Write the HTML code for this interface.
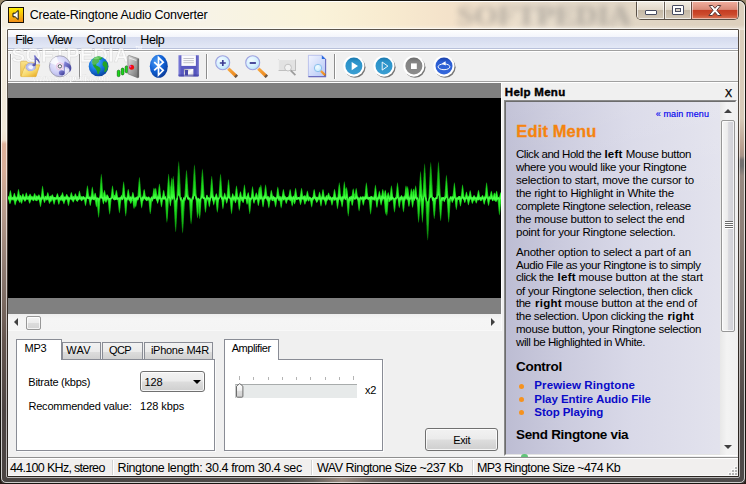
<!DOCTYPE html>
<html lang="en"><head><meta charset="utf-8"><title>Create-Ringtone Audio Converter</title>
<style>
html,body{margin:0;padding:0}
body{width:746px;height:484px;overflow:hidden;background:linear-gradient(to bottom,#9a8a6c 0,#6b5a45 30px,#2a1c18 440px);position:relative;font-family:"Liberation Sans","DejaVu Sans",sans-serif;font-size:12px;color:#000}
.a{position:absolute;display:block}
.t{position:absolute;white-space:nowrap}
#win{left:0;top:0;width:746px;height:484px;border-radius:7px 7px 6px 6px;background:#17140f;overflow:hidden}
#titlebg{left:1px;top:1px;width:744px;height:29px;border-radius:6px 6px 0 0;background:linear-gradient(to bottom,rgba(255,255,255,.9) 0,rgba(255,255,255,.9) 1px,rgba(255,255,255,0) 1.5px,rgba(255,255,255,0) 24px,rgba(255,255,255,.35) 28px),linear-gradient(to right,#f4efe1 0,#f7f3e6 28%,#faf3da 42%,#f8ebd0 52%,#f4e2ca 60%,#eadfce 72%,#e2d7c6 84%,#dccfbc 100%)}
#frameL{left:1px;top:30px;width:7px;height:448px;background:linear-gradient(to bottom,#f3eee0 0,#f1e9d9 100px,#f0e2d0 110px,#e0b29a 114px,#d9ae98 140px,#b89c8c 180px,#8d7a70 240px,#65564f 310px,#4c4442 380px,#4a4442 448px)}
#frameR{left:738px;top:30px;width:7px;height:448px;background:linear-gradient(to bottom,#dccfbc 0,#d8cab8 88px,#b89e8e 118px,#a89488 126px,#757070 130px,#707070 136px,#988a82 146px,#8e8078 200px,#6a605c 300px,#4e4846 380px,#4e4a4a 448px)}
#frameB{left:1px;top:476px;width:744px;height:7px;background:linear-gradient(to right,#4a4442 0,#504c4a 38%,#66605c 42%,#9a8a80 45.800%,#6a625e 50%,#524e4c 56%,#4e4a4a 100%)}
#client{left:8px;top:30px;width:730px;height:446px;background:#f0f0f0;overflow:hidden}
#menubar{left:0;top:0;width:730px;height:19px;background:linear-gradient(to bottom,#ffffff 0,#f3f5fb 7px,#d5dbee 7.5px,#e3e8f6 18px);border-bottom:1px solid #b9c1da;box-sizing:border-box}
#tbtop{left:0;top:19px;width:730px;height:3px;background:linear-gradient(to bottom,#fff 0,#fff 1px,#a0a0a0 1px,#a0a0a0 2px,#fff 2px,#fff 3px)}
#tbbot{left:0;top:51px;width:730px;height:2px;background:linear-gradient(to bottom,#a0a0a0 0,#a0a0a0 1px,#fff 1px,#fff 2px)}
.sep{width:1px;height:25px;top:24px;background:#8c8c8c;box-shadow:1px 0 0 #fff}
#band1{left:0;top:53px;width:493px;height:15px;background:#808080}
#wavebox{left:0;top:68px;width:493px;height:200px;background:#000;overflow:hidden}
#band2{left:0;top:268px;width:493px;height:16px;background:#808080}
#hscroll{left:0;top:284px;width:493px;height:16px;background:linear-gradient(to bottom,#eeeeee,#f5f5f5 30%,#f4f4f4);border-bottom:1px solid #f8f8f8}
.arrowL{width:0;height:0;border-top:4px solid transparent;border-bottom:4px solid transparent;border-right:4px solid #404040}
.arrowR{width:0;height:0;border-top:4px solid transparent;border-bottom:4px solid transparent;border-left:4px solid #404040}
#hthumb{left:18px;top:286px;width:15px;height:14px;border:1px solid #979797;border-radius:2px;box-sizing:border-box;background:linear-gradient(to bottom,#f4f4f4 0,#ececec 48%,#dcdcdc 52%,#d4d4d4 100%);box-shadow:inset 0 0 0 1px rgba(255,255,255,.7)}
.pane{background:#fff;border:1px solid #898c95;box-sizing:border-box;box-shadow:1px 1px 0 #fbfbfb}
.tab{box-sizing:border-box;border:1px solid #898c95;border-bottom:none;background:linear-gradient(to bottom,#f2f2f2 0,#ebebeb 50%,#dddddd 50%,#cfcfcf 100%)}
.tabsel{box-sizing:border-box;border:1px solid #898c95;border-bottom:none;background:#fff}
#combo{left:132px;top:341px;width:65px;height:21px;box-sizing:border-box;border:1px solid #707070;border-radius:3px;background:linear-gradient(to bottom,#f2f2f2 0,#ebebeb 48%,#dddddd 52%,#cfcfcf 100%);box-shadow:inset 0 0 0 1px rgba(255,255,255,.8)}
#comboarrow{left:185px;top:350px;width:0;height:0;border-left:4px solid transparent;border-right:4px solid transparent;border-top:4px solid #000}
#exit{left:417px;top:398px;width:73px;height:23px;box-sizing:border-box;border:1px solid #707070;border-radius:3px;background:linear-gradient(to bottom,#f2f2f2 0,#ebebeb 48%,#dddddd 52%,#cfcfcf 100%);box-shadow:inset 0 0 0 1px rgba(255,255,255,.8)}
#track{left:227px;top:354px;width:122px;height:14px;background:#e7eaea;border-top:1px solid #a8acac;border-left:1px solid #c8caca;box-sizing:border-box}
.tick{width:1px;height:3px;top:347px;background:#b4b4b4}
#sthumb{left:227.5px;top:353px}
#status{left:0;top:427px;width:730px;height:19px;background:#f1efee;border-top:1px solid #8f8f8f;box-sizing:border-box;box-shadow:inset 0 1px 0 #fff,inset 0 -1px 0 #fbfbfb}
.sdiv{top:430px;width:1px;height:15px;background:#d2d2d2;box-shadow:1px 0 0 #fff}
#helpbox{left:496px;top:70px;width:233px;height:356px;box-sizing:border-box;border:1px solid;border-color:#8a8a8a #fff #fff #8a8a8a;background:#f0f0f0}
#helpin{left:0;top:0;width:231px;height:354px;box-sizing:border-box;border:1px solid;border-color:#6c6c6c #e3e3e3 #e3e3e3 #6c6c6c;background:linear-gradient(to bottom,rgba(255,255,255,.1) 0,rgba(255,255,255,0) 30%),linear-gradient(to right,#bdbdd3 0,#cbcbde 25%,#d9d9e8 55%,#e4e4ee 100%);overflow:hidden}
#vscroll{left:712px;top:72px;width:17px;height:353px;background:linear-gradient(to right,#e8e8e8,#f3f3f3 40%,#f0f0f0)}
#vthumb{left:712.5px;top:90px;width:14.5px;height:212px;box-sizing:border-box;border:1px solid #979797;border-radius:2px;background:linear-gradient(to right,#f5f5f5 0,#ececec 45%,#d9d9de 55%,#cfcfd6 100%);box-shadow:inset 0 0 0 1px rgba(255,255,255,.7)}
.bul{width:5px;height:5px;border-radius:50%;background:#f6921e}

#fout{left:1px;top:1px;width:744px;height:482px;box-sizing:border-box;border:1px solid rgba(255,255,255,.72);border-radius:6px 6px 5px 5px}
#fin{left:6px;top:28px;width:734px;height:450px;box-sizing:border-box;border:1px solid rgba(255,255,255,.6);border-radius:2px}
#cborder{left:7px;top:29px;width:732px;height:448px;box-sizing:border-box;border:1px solid rgba(30,24,18,.72);border-radius:1px}

</style></head>
<body>
<div id="win" class="a">
 <div id="titlebg" class="a"></div>
 <div id="frameL" class="a"></div>
 <div id="frameR" class="a"></div>
 <div id="frameB" class="a"></div>
 <svg class="a" style="left:440px;top:1px" width="220" height="28"><defs><filter id="blr" x="-10%" y="-40%" width="120%" height="180%"><feGaussianBlur stdDeviation="3"/></filter></defs><text x="17" y="23.500" font-family="Liberation Serif, serif" font-weight="bold" font-size="30" textLength="174" lengthAdjust="spacingAndGlyphs" fill="#87837f" opacity=".58" filter="url(#blr)">SOFTPEDIA</text></svg>
 <!-- caption buttons -->
 <div id="capbtns" class="a" style="left:636px;top:1px;width:103px;height:19px;box-sizing:border-box;border:1px solid #5a5046;border-top:none;border-radius:0 0 5px 5px;overflow:hidden;background:#d9cebd">
   <div class="a" style="left:0;top:0;width:27px;height:18px;background:linear-gradient(to bottom,#f3eee4 0,#e2d9ca 48%,#c4b8a6 52%,#d4c9b8 100%);box-shadow:inset 0 0 0 1px rgba(255,255,255,.65)"></div>
   <div class="a" style="left:27px;top:0;width:1px;height:18px;background:#6a6056"></div>
   <div class="a" style="left:28px;top:0;width:26px;height:18px;background:linear-gradient(to bottom,#f3eee4 0,#e2d9ca 48%,#c4b8a6 52%,#d4c9b8 100%);box-shadow:inset 0 0 0 1px rgba(255,255,255,.65)"></div>
   <div class="a" style="left:54px;top:0;width:1px;height:18px;background:#6a4a40"></div>
   <div class="a" style="left:55px;top:0;width:46px;height:18px;background:linear-gradient(to bottom,#f2b0a0 0,#d98a78 47%,#c43c22 50%,#cc4a2c 75%,#d9785a 100%);box-shadow:inset 0 0 0 1px rgba(255,255,255,.5)"></div>
   <!-- glyphs -->
   <div class="a" style="left:8px;top:9px;width:12px;height:5px;box-sizing:border-box;border:1px solid #484c60;background:#fff;border-radius:1px"></div>
   <div class="a" style="left:35px;top:4px;width:12px;height:10px;box-sizing:border-box;border:1px solid #484c60;background:#fff;border-radius:1px"></div>
   <div class="a" style="left:38px;top:7px;width:6px;height:4px;box-sizing:border-box;border:1px solid #484c60;background:#d8d0c4"></div>
   <svg class="a" style="left:70px;top:3px" width="16" height="13" viewBox="0 0 16 13"><path d="M2.2 1.5h3.3L8 4.3l2.5-2.8h3.3L9.9 6.3l4.2 5.2h-3.4L8 8.3l-2.7 3.2H1.9l4.2-5.2z" fill="#fff" stroke="#5a3a38" stroke-width="1" stroke-linejoin="round"/></svg>
 </div>
 <!-- app icon -->
 <svg class="a" style="left:8px;top:7px" width="16" height="16" viewBox="0 0 16 16"><defs><linearGradient id="ig" x1="0" y1="0" x2="0" y2="1"><stop offset="0" stop-color="#fff200"/><stop offset="1" stop-color="#f08a18"/></linearGradient></defs><rect x=".5" y=".5" width="15" height="15" fill="url(#ig)" stroke="#1a1208"/><path d="M5 6.2h2.2L10.2 3.4v9.2L7.2 9.8H5z" fill="#fff" stroke="#111" stroke-width="1" stroke-linejoin="miter"/></svg>
 <div id="fout" class="a"></div>
 <div id="fin" class="a"></div>
 <div id="cborder" class="a"></div>
 <div id="client" class="a">
  <div id="menubar" class="a"></div>
  <div id="tbtop" class="a"></div>
  <div id="tbbot" class="a"></div>
  <div class="a sep" style="left:2px"></div>
  <div class="a sep" style="left:71px"></div>
  <div class="a sep" style="left:198px"></div>
  <div class="a sep" style="left:326px"></div>
<svg class="a" style="left:0;top:16px" width="470" height="36" viewBox="8 46 470 36">
<defs>
<linearGradient id="fy" x1="0" y1="0" x2="1" y2="1"><stop offset="0" stop-color="#fdf0b0"/><stop offset=".55" stop-color="#f7d768"/><stop offset="1" stop-color="#e8a820"/></linearGradient>
<linearGradient id="fyb" x1="0" y1="0" x2="0" y2="1"><stop offset="0" stop-color="#f9e28a"/><stop offset="1" stop-color="#eec046"/></linearGradient>
<linearGradient id="nt" x1="0" y1="0" x2="1" y2="1"><stop offset="0" stop-color="#8c8ce0"/><stop offset="1" stop-color="#34348c"/></linearGradient>
<radialGradient id="cd" cx=".4" cy=".35" r=".75"><stop offset="0" stop-color="#f4f4ff"/><stop offset=".6" stop-color="#cfcff6"/><stop offset="1" stop-color="#a8a8e0"/></radialGradient>
<radialGradient id="gl" cx=".38" cy=".32" r=".75"><stop offset="0" stop-color="#4eb4ff"/><stop offset=".5" stop-color="#1878e0"/><stop offset="1" stop-color="#083c98"/></radialGradient>
<radialGradient id="bt" cx=".35" cy=".3" r=".8"><stop offset="0" stop-color="#4a9cf4"/><stop offset=".5" stop-color="#1262d6"/><stop offset="1" stop-color="#083690"/></radialGradient>
<linearGradient id="ph" x1="0" y1="0" x2="1" y2="1"><stop offset="0" stop-color="#e4e4e4"/><stop offset=".5" stop-color="#a8a8a8"/><stop offset="1" stop-color="#6c6c6c"/></linearGradient>
<linearGradient id="fl" x1="0" y1="0" x2="1" y2="0"><stop offset="0" stop-color="#8484dc"/><stop offset=".15" stop-color="#5a5ac2"/><stop offset=".85" stop-color="#5454bc"/><stop offset="1" stop-color="#7878d0"/></linearGradient>
<linearGradient id="mt" x1="0" y1="0" x2="1" y2="1"><stop offset="0" stop-color="#9a9aa8"/><stop offset=".5" stop-color="#fff"/><stop offset="1" stop-color="#c8c8d0"/></linearGradient>
<radialGradient id="ln" cx=".4" cy=".35" r=".7"><stop offset="0" stop-color="#f4fcff"/><stop offset=".7" stop-color="#cfeeff"/><stop offset="1" stop-color="#b4dcf8"/></radialGradient>
<linearGradient id="hd" x1="0" y1="0" x2="1" y2="1"><stop offset="0" stop-color="#f8a840"/><stop offset=".8" stop-color="#ec8a20"/><stop offset="1" stop-color="#806040"/></linearGradient>
<linearGradient id="pg" x1="0" y1="0" x2="1" y2="1"><stop offset="0" stop-color="#f2f5ff"/><stop offset="1" stop-color="#b4c6f6"/></linearGradient>
<linearGradient id="pb" x1="0" y1="0" x2="0" y2="1"><stop offset="0" stop-color="#1a78ae"/><stop offset=".25" stop-color="#2b93ca"/><stop offset="1" stop-color="#3a9ed2"/></linearGradient>
<linearGradient id="sb" x1="0" y1="0" x2="0" y2="1"><stop offset="0" stop-color="#6c6c6c"/><stop offset=".25" stop-color="#848484"/><stop offset="1" stop-color="#8c8c8c"/></linearGradient>
<linearGradient id="lb" x1="0" y1="0" x2="0" y2="1"><stop offset="0" stop-color="#1a40a8"/><stop offset=".25" stop-color="#2a5cd2"/><stop offset="1" stop-color="#3468dc"/></linearGradient>
<filter id="sh" x="-30%" y="-30%" width="170%" height="170%"><feGaussianBlur stdDeviation=".7"/></filter>
<filter id="b3" x="-10%" y="-10%" width="120%" height="120%"><feGaussianBlur stdDeviation=".35"/></filter>
</defs>
<!-- watermark -->
<text x="11.5" y="62" font-family="Liberation Sans, sans-serif" font-weight="bold" font-size="19.5" textLength="117" lengthAdjust="spacingAndGlyphs" fill="#fff" stroke="#cfcfcf" stroke-width=".45" opacity=".72">SOFTPEDIA</text><text x="135.500" y="50" font-family="Liberation Sans, sans-serif" font-size="4.5" fill="#fff" opacity=".9">TM</text>
<text x="32.4" y="80.6" font-family="Liberation Sans, sans-serif" font-weight="bold" font-size="9.5" textLength="78.6" lengthAdjust="spacingAndGlyphs" fill="#fff" stroke="#d4d4d4" stroke-width=".25" opacity=".85">www.softpedia.com</text>
<g filter="url(#b3)">
<!-- folder -->
<path d="M20.600 62.200q0-1 1-1h5l1.400 1.600h5.600q.9 0 .9 .9V75l-13.900 1.200z" fill="url(#fyb)" stroke="#d6a83a" stroke-width=".6"/>
<path d="M25.400 64.800h14.400L36 76.600H21.400z" fill="url(#fy)" stroke="#dca830" stroke-width=".6"/>
<path d="M26 66.200a4.800 4.200 0 0 1 9.400 .6a4.800 4.400 0 0 1-2.400 4.400a6 4 0 0 1-6.600-2.200a4 4 0 0 1-.4-2.800z" fill="#bcc2f0" stroke="#8890d6" stroke-width=".5"/>
<path d="M28.300 66.600a2.600 2.200 0 0 1 5 .4a2.800 2.400 0 0 1-1.600 2.200a3.400 2.400 0 0 1-3.400-2.600z" fill="#f2f4ff"/>
<path d="M24.200 68.800q4.500 5.400 12.600-.6L36 76.600H21.400z" fill="url(#fy)" opacity=".97"/>
<path d="M33.800 55.600l1.400-.4q1 2.400 3.400 4.200q1.800 2 .4 4.600q0-2.400-1.700-3.500l-1.300-.8v4.500q0 1.800-2 2q-1.700 0-1.700-1.200q.1-1.500 2.300-1.700l-.1-5.700z" fill="url(#nt)"/>
<!-- cd -->
<circle cx="59.900" cy="66.300" r="10.500" fill="url(#cd)" stroke="#8c8c9c" stroke-width=".7"/>
<path d="M59.900 66.300L50 63a10.500 10.500 0 0 1 6.500-6.600z" fill="#fff" opacity=".75"/>
<path d="M59.900 66.300L69.800 69.600a10.500 10.500 0 0 1-6.500 6.600z" fill="#fff" opacity=".6"/>
<circle cx="59.900" cy="66.300" r="3.600" fill="#ece4f6" stroke="#f0a8d0" stroke-width=".5"/>
<circle cx="59.900" cy="66.300" r="1.700" fill="#fff" stroke="#505058" stroke-width=".9"/>
<ellipse cx="61.800" cy="72.800" rx="3" ry="2.500" fill="url(#nt)"/>
<path d="M64.300 72.800V63.600" stroke="#7474c8" stroke-width=".9"/>
<path d="M64.300 61.800l1.200-.2q1.400 1.200 3.600 2.200q3 2 2 6q-.6 1.800-1.800 2.600q1-3.600-1.200-5q-1.600-.8-3.800-1z" fill="url(#nt)"/>
<!-- globe -->
<circle cx="98.600" cy="66.400" r="9.900" fill="url(#gl)"/>
<path d="M92.500 59.500q2.500-2.500 6-3q3 .2 4.200 1.500q-1.500 1.800-3.700 2.200q.6 1.600-1 2.600q-1.600 .6-2.200 2.400q1.800 .4 3.400 1.800q1.800 1.200 1.400 3q-1.200 1.600-1.800 3.800q-1 .8-1.400-.6q-.4-2.600-1.800-4.400q-2-1.600-3-4.200q-1-2 -.1-5.100z" fill="#23a428"/>
<path d="M103.500 61.500q2-.8 3.200 .8q1.400 2.600 1 5.600q-.8 3-2.600 4.400q-1 .2-.8-1.400q.8-2 .2-3.800q-1.600-.6-2-2.400q-.2-2 1-3.200z" fill="#23a428"/>
<path d="M93 58.500q2.500-2.300 5.500-2.300q2.500 .2 3.500 1.300q-1.800 1.200-3.600 1.300q-3 .8-5.400-.3z" fill="#6ad05a" opacity=".8"/>
<ellipse cx="95.500" cy="61" rx="4.500" ry="3" fill="#fff" opacity=".22" transform="rotate(-35 95.500 61)"/>
<!-- signal -->
<g stroke="#0a6a0a" stroke-width=".7" fill="#18dc18">
<rect x="117.300" y="70.200" width="2.600" height="6.400" rx="1.200"/>
<rect x="121.300" y="68.100" width="2.600" height="6.800" rx="1.200"/>
<rect x="125.200" y="65.900" width="2.600" height="6.800" rx="1.200"/>
</g>
<path d="M127.900 56.200l1.200-.7l9.600 3.200v18.600l-1.200 .4l-9.600-3.900z" fill="url(#ph)" stroke="#6a6a6a" stroke-width=".6"/>
<path d="M137.500 59.300l1.200-.6v18.600l-1.200 .4z" fill="#5c5c5c"/>
<path d="M129.300 57.500l7 2.400v1l-7-2.400z" fill="#f4f4f4" opacity=".8"/>
<circle cx="131.600" cy="67.200" r="2.500" fill="#f01010"/>
<circle cx="130.300" cy="66.600" r="1" fill="#e040e0"/>
<!-- bluetooth -->
<ellipse cx="158.800" cy="66.300" rx="9" ry="11.500" fill="url(#bt)"/>
<path d="M154.200 62.200l9 8.100l-4.700 4.700V57.600l4.700 4.600l-9 8.100" fill="none" stroke="#fff" stroke-width="1.700" stroke-linejoin="miter"/>
<!-- floppy -->
<path d="M178.400 55.200h20.500v20.400q0 1-1 1h-18.500q-1 0-1-1z" fill="url(#fl)"/>
<rect x="181.400" y="55.200" width="14.500" height="10.700" fill="#fbfbfd"/>
<path d="M183.400 58.500h10.500M183.400 60.600h10.500M183.400 62.700h10.500" stroke="#b4b4bc" stroke-width=".8"/>
<rect x="183.900" y="68.900" width="9.500" height="7.700" fill="url(#mt)"/>
<rect x="185" y="70" width="3" height="5.400" fill="#4848a8"/>
<path d="M178.400 74.600v1q0 1 1 1h18.500q1 0 1-1v-1z" fill="#4040a0" opacity=".6"/>
<!-- zoom in -->
<path d="M228.300 68.600l8.200 7.900" stroke="url(#hd)" stroke-width="3.200" stroke-linecap="butt"/>
<path d="M235.400 75.400l1.500 1.500" stroke="#6e5a48" stroke-width="3.200"/>
<circle cx="222.700" cy="62.700" r="7" fill="url(#ln)" stroke="#a0a4e0" stroke-width="1.100"/>
<path d="M219.800 63h6M222.800 59.900v6.200" stroke="#3c3c94" stroke-width="1.700"/>
<!-- zoom out -->
<path d="M258.300 68.600l8.200 7.900" stroke="url(#hd)" stroke-width="3.200"/>
<path d="M265.400 75.400l1.500 1.500" stroke="#6e5a48" stroke-width="3.200"/>
<circle cx="252.700" cy="62.700" r="7" fill="url(#ln)" stroke="#a0a4e0" stroke-width="1.100"/>
<path d="M249.700 63h6.200" stroke="#3c3c94" stroke-width="1.800"/>
<!-- zoom selection (disabled) -->
<rect x="278.600" y="59.600" width="17" height="10.800" fill="#e2e2e2" stroke="#b4b4b4" stroke-width=".8"/>
<path d="M278.600 70.400V59.600h17" fill="none" stroke="#fafafa" stroke-width=".9"/>
<path d="M290.600 70.400l4.800 4.800" stroke="#9c9c9c" stroke-width="1.700"/>
<circle cx="288" cy="67.600" r="3.400" fill="#f2f2f2" stroke="#bcbcbc" stroke-width=".9"/>
<!-- page zoom -->
<path d="M308.400 55.300h13.400l3.800 3.800v17.500h-17.200z" fill="url(#pg)" stroke="#9aa4e4" stroke-width=".6"/>
<path d="M325.600 59.100v17.500h-17.200" fill="none" stroke="#6a6cc0" stroke-width="1.100"/>
<path d="M321.800 55.300l3.800 3.800h-3.800z" fill="#2a6ae0"/>
<path d="M320.800 70.900l4.600 4.500" stroke="url(#hd)" stroke-width="2.200"/>
<circle cx="318" cy="68" r="3.700" fill="url(#ln)" stroke="#8cc0ec" stroke-width="1"/>
</g>
<!-- round buttons -->
<g>
<circle cx="355" cy="67.300" r="10.500" fill="#000" opacity=".5" filter="url(#sh)"/>
<circle cx="353.900" cy="66.100" r="10.600" fill="#fff"/>
<circle cx="353.900" cy="66.100" r="8.500" fill="url(#pb)"/>
<path d="M351.700 61.900v8.400l6.300-4.200z" fill="#fff"/>
<circle cx="385.100" cy="67.300" r="10.500" fill="#000" opacity=".5" filter="url(#sh)"/>
<circle cx="384" cy="66.100" r="10.600" fill="#fff"/>
<circle cx="384" cy="66.100" r="8.500" fill="url(#pb)"/>
<path d="M382.200 62.100v8l5.700-4z" fill="none" stroke="#fff" stroke-width=".9"/>
<circle cx="415" cy="67.300" r="10.500" fill="#000" opacity=".5" filter="url(#sh)"/>
<circle cx="413.900" cy="66.100" r="10.600" fill="#fff"/>
<circle cx="413.900" cy="66.100" r="8.500" fill="url(#sb)"/>
<rect x="411" y="63.400" width="5.800" height="5.600" fill="#fff"/>
<circle cx="445.100" cy="67.300" r="10.500" fill="#000" opacity=".5" filter="url(#sh)"/>
<circle cx="444" cy="66.100" r="10.600" fill="#fff"/>
<circle cx="444" cy="66.100" r="8.500" fill="url(#lb)"/>
<ellipse cx="444" cy="66.800" rx="5.900" ry="2.900" fill="none" stroke="#fff" stroke-width=".95"/>
<path d="M445.600 61.300v4.200l-3.800-2.100z" fill="#fff"/>
</g>
</svg>

  <div id="band1" class="a"></div>
  <div id="wavebox" class="a">
<svg class="a" style="left:0;top:0" width="493" height="200" viewBox="0 0 493 200"><defs><linearGradient id="wg" gradientUnits="userSpaceOnUse" x1="0" y1="55" x2="0" y2="145"><stop offset="0" stop-color="#075a07"/><stop offset=".3" stop-color="#0c8c0c"/><stop offset=".45" stop-color="#14b814"/><stop offset=".5" stop-color="#1fd81f"/><stop offset=".55" stop-color="#14b814"/><stop offset=".7" stop-color="#0c8c0c"/><stop offset="1" stop-color="#075a07"/></linearGradient><linearGradient id="wg2" gradientUnits="userSpaceOnUse" x1="0" y1="55" x2="0" y2="145"><stop offset="0" stop-color="#0c8a0c"/><stop offset=".3" stop-color="#18c818"/><stop offset=".45" stop-color="#2af52a"/><stop offset=".5" stop-color="#4aff4a"/><stop offset=".55" stop-color="#2af52a"/><stop offset=".7" stop-color="#18c818"/><stop offset="1" stop-color="#0c8a0c"/></linearGradient><filter id="wb" x="-2%" y="-10%" width="104%" height="120%"><feGaussianBlur stdDeviation="0.55"/></filter><filter id="wb2" x="-2%" y="-10%" width="104%" height="120%"><feGaussianBlur stdDeviation="0.35"/></filter></defs><path d="M0.0,98.6 0.5,98.3 1.0,97.3 1.5,94.6 2.0,92.6 2.5,92.1 3.0,93.2 3.5,95.7 4.0,98.7 4.5,99.0 5.0,98.4 5.5,96.3 6.0,95.0 6.5,94.8 7.0,95.7 7.5,97.4 8.0,98.8 8.5,99.0 9.0,97.7 9.5,94.3 10.0,91.7 10.5,90.8 11.0,91.9 11.5,94.5 12.0,97.2 12.5,96.8 13.0,97.4 13.5,98.4 14.0,97.1 14.5,95.7 15.0,95.3 15.5,96.0 16.0,97.4 16.5,98.7 17.0,97.9 17.5,95.8 18.0,94.6 18.5,94.5 19.0,95.6 19.5,97.4 20.0,98.5 20.5,97.8 21.0,97.4 21.5,96.2 22.0,95.6 22.5,95.9 23.0,97.1 23.5,98.1 24.0,98.0 24.5,98.2 25.0,98.7 25.5,97.2 26.0,95.7 26.5,94.9 27.0,95.3 27.5,96.6 28.0,97.8 28.5,97.4 29.0,97.4 29.5,98.0 30.0,97.6 30.5,96.6 31.0,96.2 31.5,96.9 32.0,98.3 32.5,99.8 33.0,97.6 33.5,92.8 34.0,89.0 34.5,87.6 35.0,88.5 35.5,91.7 36.0,96.3 36.5,98.7 37.0,98.3 37.5,97.7 38.0,97.7 38.5,97.7 39.0,95.6 39.5,94.2 40.0,94.1 40.5,95.3 41.0,97.5 41.5,98.5 42.0,97.9 42.5,97.6 43.0,98.0 43.5,97.3 44.0,96.4 44.5,96.2 45.0,96.9 45.5,98.3 46.0,99.1 46.5,99.1 47.0,99.1 47.5,99.2 48.0,98.6 48.5,96.7 49.0,95.4 49.5,94.9 50.0,95.8 50.5,97.5 51.0,99.3 51.5,99.2 52.0,98.7 52.5,97.8 53.0,97.2 53.5,96.5 54.0,94.7 54.5,94.1 55.0,94.7 55.5,96.6 56.0,98.6 56.5,98.5 57.0,98.6 57.5,98.2 58.0,96.8 58.5,95.9 59.0,95.9 59.5,97.0 60.0,98.2 60.5,98.6 61.0,99.1 61.5,99.5 62.0,97.9 62.5,95.7 63.0,94.3 63.5,94.1 64.0,95.1 64.5,97.1 65.0,98.0 65.5,98.1 66.0,98.4 66.5,96.8 67.0,95.6 67.5,95.3 68.0,96.0 68.5,97.5 69.0,98.2 69.5,98.2 70.0,98.1 70.5,95.3 71.0,93.3 71.5,92.6 72.0,93.5 72.5,95.7 73.0,98.4 73.5,98.3 74.0,98.3 74.5,98.5 75.0,98.1 75.5,98.0 76.0,98.3 76.5,99.0 77.0,99.5 77.5,99.1 78.0,96.2 78.5,91.5 79.0,88.1 79.5,87.2 80.0,88.8 80.5,92.4 81.0,97.1 81.5,98.6 82.0,99.0 82.5,98.7 83.0,95.9 83.5,91.6 84.0,89.0 84.5,88.6 85.0,90.4 85.5,94.0 86.0,97.5 86.5,95.6 87.0,94.5 87.5,95.0 88.0,96.5 88.5,98.6 89.0,99.6 89.5,99.5 90.0,99.7 90.5,100.0 91.0,100.2 91.5,96.6 92.0,87.8 92.5,80.3 93.0,76.3 93.5,75.8 94.0,79.0 94.5,85.5 95.0,93.6 95.5,95.5 96.0,93.0 96.5,91.7 97.0,92.5 97.5,94.9 98.0,98.0 98.5,96.8 99.0,96.2 99.5,96.5 100.0,97.2 100.5,98.5 101.0,100.0 101.5,100.3 102.0,100.2 102.5,100.0 103.0,96.7 103.5,91.7 104.0,88.4 104.5,87.2 105.0,88.5 105.5,91.9 106.0,96.5 106.5,96.9 107.0,96.8 107.5,94.2 108.0,92.2 108.5,91.7 109.0,93.0 109.5,95.6 110.0,99.0 110.5,99.7 111.0,99.8 111.5,99.6 112.0,99.3 112.5,98.9 113.0,97.4 113.5,97.1 114.0,96.4 114.5,90.5 115.0,85.7 115.5,83.2 116.0,83.9 116.5,88.0 117.0,94.1 117.5,99.2 118.0,99.4 118.5,99.6 119.0,96.6 119.5,92.8 120.0,91.0 120.5,91.1 121.0,92.9 121.5,96.1 122.0,98.6 122.5,98.5 123.0,98.5 123.5,98.6 124.0,95.9 124.5,94.1 125.0,94.0 125.5,95.1 126.0,97.2 126.5,99.5 127.0,99.4 127.5,99.5 128.0,99.5 128.5,98.9 129.0,98.3 129.5,98.0 130.0,90.9 130.5,84.3 131.0,80.0 131.5,78.8 132.0,81.1 132.5,86.6 133.0,94.0 133.5,99.4 134.0,99.0 134.5,98.6 135.0,95.5 135.5,92.4 136.0,90.9 136.5,91.2 137.0,93.3 137.5,96.6 138.0,98.4 138.5,98.5 139.0,98.7 139.5,99.1 140.0,98.7 140.5,98.3 141.0,98.9 141.5,99.7 142.0,100.4 142.5,100.0 143.0,99.4 143.5,98.8 144.0,98.5 144.5,97.2 145.0,93.3 145.5,90.5 146.0,89.5 146.5,90.7 147.0,91.4 147.5,89.7 148.0,90.0 148.5,92.3 149.0,96.1 149.5,97.9 150.0,94.9 150.5,89.8 151.0,86.3 151.5,85.5 152.0,87.3 152.5,91.8 153.0,97.4 153.5,100.0 154.0,99.4 154.5,96.0 155.0,93.1 155.5,91.7 156.0,92.1 156.5,94.1 157.0,97.1 157.5,98.7 158.0,100.0 158.5,100.8 159.0,93.2 159.5,85.2 160.0,78.9 160.5,75.7 161.0,76.2 161.5,81.7 162.0,89.5 162.5,87.6 163.0,82.2 163.5,79.5 164.0,80.2 164.5,82.0 165.0,78.3 165.5,78.1 166.0,82.6 166.5,89.8 167.0,98.2 167.5,102.5 168.0,102.7 168.5,99.3 169.0,87.5 169.5,76.0 170.0,67.3 170.5,63.3 171.0,63.7 171.5,68.4 172.0,76.7 172.5,87.5 173.0,99.3 173.5,101.6 174.0,102.1 174.5,101.6 175.0,101.0 175.5,100.5 176.0,100.1 176.5,97.2 177.0,87.4 177.5,79.2 178.0,73.6 178.5,71.6 179.0,73.6 179.5,79.2 180.0,87.4 180.5,96.4 181.0,99.0 181.5,99.9 182.0,100.6 182.5,101.3 183.0,101.7 183.5,100.9 184.0,100.0 184.5,94.0 185.0,82.7 185.5,73.8 186.0,68.0 186.5,66.2 187.0,68.7 187.5,75.1 188.0,84.8 188.5,95.9 189.0,99.2 189.5,99.9 190.0,100.6 190.5,100.5 191.0,100.9 191.5,101.2 192.0,101.3 192.5,96.2 193.0,86.1 193.5,77.2 194.0,71.9 194.5,70.6 195.0,73.3 195.5,79.5 196.0,88.4 196.5,98.2 197.0,100.3 197.5,100.0 198.0,98.5 198.5,97.2 199.0,96.4 199.5,96.9 200.0,98.2 200.5,99.4 201.0,99.6 201.5,99.8 202.0,95.5 202.5,87.7 203.0,81.4 203.5,78.1 204.0,78.2 204.5,81.9 205.0,88.5 205.5,96.1 206.0,98.8 206.5,99.1 207.0,98.5 207.5,96.5 208.0,95.4 208.5,95.4 209.0,96.5 209.5,98.2 210.0,100.0 210.5,99.1 211.0,90.7 211.5,83.1 212.0,77.7 212.5,75.5 213.0,77.1 213.5,82.2 214.0,90.1 214.5,98.4 215.0,99.2 215.5,97.9 216.0,95.7 216.5,94.4 217.0,94.8 217.5,96.2 218.0,98.4 218.5,99.3 219.0,93.6 219.5,87.2 220.0,82.5 220.5,80.9 221.0,82.6 221.5,87.1 222.0,93.6 222.5,99.3 223.0,100.1 223.5,98.5 224.0,96.7 224.5,95.5 225.0,95.2 225.5,96.4 226.0,98.3 226.5,98.3 227.0,96.2 227.5,91.8 228.0,88.5 228.5,87.3 229.0,88.7 229.5,92.2 230.0,97.1 230.5,99.7 231.0,98.6 231.5,96.0 232.0,94.0 232.5,93.2 233.0,93.9 233.5,96.3 234.0,98.9 234.5,98.7 235.0,95.4 235.5,90.7 236.0,87.3 236.5,86.3 237.0,88.1 237.5,91.9 238.0,96.9 238.5,98.4 239.0,97.6 239.5,95.6 240.0,94.0 240.5,94.4 241.0,96.2 241.5,98.6 242.0,100.0 242.5,99.9 243.0,97.7 243.5,92.8 244.0,89.5 244.5,88.1 245.0,89.2 245.5,92.4 246.0,96.7 246.5,99.3 247.0,97.7 247.5,95.7 248.0,94.6 248.5,94.5 249.0,95.6 249.5,97.9 250.0,95.8 250.5,91.8 251.0,89.2 251.5,88.5 252.0,89.9 252.5,86.9 253.0,86.4 253.5,88.5 254.0,92.9 254.5,98.2 255.0,99.0 255.5,98.0 256.0,97.2 256.5,91.9 257.0,88.1 257.5,86.3 258.0,87.2 258.5,90.4 259.0,95.1 259.5,97.9 260.0,98.0 260.5,98.3 261.0,99.0 261.5,99.6 262.0,97.3 262.5,94.0 263.0,92.1 263.5,91.8 264.0,93.2 264.5,95.8 265.0,97.7 265.5,97.7 266.0,98.1 266.5,98.9 267.0,99.2 267.5,99.4 268.0,99.6 268.5,95.4 269.0,91.2 269.5,88.8 270.0,88.7 270.5,90.7 271.0,94.5 271.5,97.8 272.0,97.9 272.5,98.5 273.0,99.3 273.5,98.7 274.0,97.4 274.5,93.7 275.0,91.3 275.5,90.9 276.0,92.3 276.5,95.1 277.0,97.5 277.5,98.1 278.0,99.0 278.5,99.3 279.0,99.1 279.5,98.9 280.0,98.6 280.5,97.8 281.0,95.2 281.5,92.3 282.0,90.9 282.5,91.3 283.0,93.6 283.5,97.2 284.0,98.6 284.5,99.0 285.0,98.1 285.5,97.6 286.0,98.1 286.5,94.4 287.0,91.3 287.5,89.8 288.0,90.3 288.5,93.0 289.0,96.8 289.5,98.8 290.0,99.0 290.5,98.9 291.0,98.9 291.5,98.8 292.0,97.6 292.5,94.0 293.0,91.1 293.5,89.8 294.0,90.6 294.5,93.5 295.0,97.4 295.5,97.9 296.0,97.8 296.5,97.3 297.0,97.3 297.5,97.7 298.0,97.8 298.5,95.1 299.0,93.1 299.5,92.6 300.0,93.7 300.5,96.0 301.0,98.7 301.5,98.5 302.0,98.6 302.5,99.1 303.0,99.8 303.5,99.9 304.0,99.6 304.5,99.2 305.0,95.6 305.5,92.6 306.0,90.9 306.5,91.2 307.0,93.2 307.5,96.4 308.0,98.5 308.5,98.8 309.0,98.7 309.5,98.8 310.0,99.0 310.5,96.6 311.0,94.5 311.5,93.5 312.0,94.2 312.5,96.2 313.0,98.6 313.5,98.3 314.0,94.6 314.5,91.7 315.0,90.8 315.5,91.7 316.0,94.3 316.5,97.8 317.0,99.3 317.5,98.4 318.0,97.6 318.5,97.2 319.0,97.3 319.5,96.9 320.0,95.2 320.5,94.4 321.0,94.8 321.5,96.3 322.0,98.3 322.5,98.2 323.0,98.7 323.5,99.4 324.0,99.5 324.5,99.3 325.0,98.0 325.5,94.4 326.0,91.8 326.5,90.8 327.0,91.7 327.5,94.2 328.0,97.6 328.5,99.6 329.0,99.5 329.5,98.9 330.0,93.2 330.5,87.9 331.0,84.6 331.5,84.5 332.0,87.3 332.5,92.1 333.0,98.0 333.5,98.7 334.0,98.3 334.5,98.1 335.0,93.0 335.5,87.2 336.0,83.7 336.5,83.2 337.0,85.7 337.5,90.5 338.0,90.7 338.5,88.7 339.0,89.8 339.5,92.8 340.0,97.1 340.5,100.8 341.0,100.0 341.5,99.2 342.0,98.5 342.5,98.2 343.0,97.7 343.5,98.0 344.0,95.4 344.5,92.2 345.0,90.5 345.5,90.6 346.0,92.8 346.5,96.3 347.0,95.1 347.5,91.8 348.0,90.0 348.5,90.3 349.0,92.5 349.5,96.0 350.0,98.6 350.5,99.4 351.0,100.1 351.5,99.8 352.0,99.1 352.5,98.5 353.0,98.6 353.5,99.0 354.0,98.6 354.5,98.3 355.0,98.3 355.5,98.4 356.0,98.8 356.5,98.3 357.0,93.3 357.5,88.1 358.0,84.9 358.5,84.3 359.0,86.5 359.5,91.1 360.0,96.7 360.5,99.0 361.0,98.8 361.5,99.0 362.0,98.9 362.5,98.2 363.0,97.8 363.5,97.9 364.0,98.3 364.5,98.6 365.0,98.9 365.5,98.4 366.0,95.9 366.5,91.1 367.0,87.6 367.5,86.4 368.0,88.2 368.5,92.1 369.0,97.0 369.5,99.6 370.0,97.9 370.5,94.9 371.0,93.1 371.5,92.6 372.0,93.9 372.5,96.5 373.0,98.2 373.5,96.7 374.0,93.3 374.5,91.1 375.0,91.0 375.5,92.7 376.0,95.9 376.5,93.4 377.0,91.8 377.5,91.9 378.0,93.5 378.5,96.9 379.0,98.2 379.5,95.9 380.0,94.5 380.5,94.3 381.0,95.9 381.5,98.4 382.0,95.7 382.5,91.2 383.0,88.1 383.5,87.3 384.0,88.8 384.5,92.5 385.0,97.4 385.5,99.7 386.0,100.4 386.5,100.3 387.0,100.0 387.5,99.6 388.0,95.3 388.5,89.7 389.0,85.7 389.5,84.1 390.0,85.8 390.5,90.1 391.0,95.7 391.5,99.4 392.0,99.0 392.5,98.5 393.0,97.4 393.5,97.0 394.0,97.4 394.5,98.7 395.0,99.3 395.5,98.6 396.0,98.1 396.5,97.0 397.0,91.8 397.5,88.3 398.0,87.2 398.5,88.5 399.0,89.9 399.5,87.9 400.0,88.7 400.5,91.6 401.0,95.8 401.5,98.9 402.0,96.9 402.5,93.0 403.0,90.6 403.5,90.3 404.0,92.1 404.5,94.2 405.0,91.5 405.5,90.4 406.0,91.3 406.5,93.0 407.0,89.2 407.5,87.3 408.0,87.9 408.5,90.7 409.0,95.7 409.5,100.2 410.0,101.0 410.5,100.3 411.0,91.5 411.5,82.8 412.0,76.0 412.5,72.6 413.0,75.1 413.5,81.3 414.0,89.8 414.5,98.2 415.0,87.4 415.5,77.1 416.0,69.1 416.5,65.2 417.0,66.5 417.5,72.5 418.0,82.6 418.5,94.3 419.0,103.6 419.5,104.0 420.0,103.9 420.5,100.8 421.0,89.1 421.5,77.5 422.0,68.4 422.5,64.3 423.0,64.6 423.5,69.3 424.0,77.5 424.5,87.9 425.0,99.1 425.5,99.5 426.0,99.8 426.5,100.0 427.0,100.3 427.5,99.9 428.0,98.8 428.5,91.7 429.0,80.8 429.5,71.5 430.0,65.2 430.5,63.0 431.0,66.0 431.5,73.3 432.0,83.3 432.5,94.4 433.0,100.7 433.5,100.1 434.0,99.4 434.5,98.9 435.0,98.9 435.5,98.9 436.0,99.1 436.5,97.8 437.0,90.0 437.5,82.8 438.0,78.0 438.5,76.4 439.0,79.2 439.5,85.5 440.0,93.7 440.5,100.9 441.0,101.2 441.5,100.6 442.0,99.3 442.5,98.2 443.0,98.3 443.5,98.4 444.0,98.2 444.5,98.1 445.0,94.2 445.5,88.7 446.0,85.1 446.5,84.2 447.0,86.4 447.5,91.2 448.0,97.1 448.5,99.8 449.0,99.6 449.5,99.3 450.0,98.4 450.5,98.0 451.0,98.0 451.5,98.0 452.0,98.2 452.5,98.7 453.0,97.0 453.5,91.9 454.0,87.8 454.5,86.3 455.0,87.4 455.5,90.8 456.0,95.6 456.5,98.9 457.0,98.4 457.5,95.9 458.0,94.0 458.5,93.5 459.0,94.3 459.5,96.5 460.0,98.6 460.5,98.3 461.0,96.5 461.5,93.7 462.0,92.1 462.5,92.4 463.0,94.3 463.5,97.2 464.0,99.2 464.5,99.3 465.0,98.5 465.5,97.4 466.0,97.1 466.5,97.3 467.0,98.0 467.5,99.1 468.0,99.5 468.5,98.8 469.0,97.9 469.5,94.7 470.0,92.4 470.5,91.7 471.0,92.7 471.5,95.1 472.0,98.2 472.5,99.1 473.0,99.2 473.5,98.2 474.0,97.4 474.5,97.1 475.0,97.3 475.5,98.4 476.0,98.9 476.5,98.4 477.0,96.3 477.5,90.5 478.0,86.1 478.5,84.2 479.0,85.1 479.5,88.9 480.0,94.5 480.5,98.8 481.0,98.4 481.5,98.3 482.0,97.3 482.5,94.7 483.0,92.9 483.5,92.7 484.0,93.9 484.5,96.4 485.0,98.2 485.5,96.1 486.0,94.7 486.5,94.4 487.0,95.3 487.5,96.0 488.0,93.8 488.5,92.7 489.0,93.1 489.5,95.0 490.0,98.2 490.5,99.6 491.0,100.1 491.5,97.8 492.0,95.8 492.5,94.6 493.0,94.6 L493.0,105.4 492.5,111.1 492.0,115.6 491.5,117.5 491.0,116.4 490.5,112.4 490.0,106.7 489.5,102.0 489.0,102.7 488.5,103.7 488.0,104.1 487.5,103.9 487.0,102.8 486.5,102.7 486.0,102.3 485.5,102.5 485.0,103.2 484.5,103.2 484.0,102.4 483.5,101.5 483.0,101.0 482.5,101.3 482.0,102.2 481.5,105.0 481.0,107.3 480.5,108.2 480.0,107.1 479.5,104.4 479.0,101.1 478.5,100.3 478.0,101.2 477.5,102.3 477.0,105.2 476.5,106.7 476.0,106.8 475.5,105.6 475.0,103.4 474.5,101.5 474.0,102.1 473.5,102.9 473.0,103.3 472.5,103.2 472.0,102.6 471.5,101.9 471.0,102.3 470.5,102.4 470.0,102.3 469.5,102.5 469.0,104.5 468.5,105.6 468.0,105.5 467.5,104.5 467.0,102.7 466.5,102.4 466.0,102.7 465.5,103.4 465.0,105.1 464.5,106.0 464.0,105.7 463.5,104.4 463.0,102.0 462.5,101.4 462.0,101.9 461.5,104.2 461.0,106.5 460.5,107.5 460.0,106.8 459.5,104.8 459.0,102.0 458.5,100.9 458.0,102.1 457.5,103.9 457.0,105.0 456.5,105.0 456.0,103.9 455.5,101.7 455.0,100.9 454.5,100.5 454.0,101.4 453.5,104.9 453.0,107.8 452.5,108.7 452.0,107.8 451.5,105.5 451.0,102.5 450.5,101.8 450.0,102.0 449.5,106.2 449.0,110.0 448.5,112.1 448.0,111.8 447.5,108.7 447.0,104.3 446.5,100.3 446.0,101.1 445.5,101.9 445.0,104.0 444.5,105.1 444.0,104.9 443.5,103.7 443.0,102.1 442.5,104.9 442.0,112.9 441.5,119.8 441.0,124.0 440.5,124.7 440.0,120.9 439.5,113.9 439.0,105.4 438.5,99.7 438.0,99.9 437.5,100.8 437.0,102.8 436.5,104.2 436.0,104.0 435.5,103.0 435.0,102.5 434.5,103.2 434.0,110.3 433.5,117.5 433.0,122.4 432.5,123.3 432.0,119.8 431.5,113.4 431.0,105.2 430.5,97.4 430.0,97.3 429.5,98.2 429.0,99.4 428.5,100.7 428.0,104.9 427.5,111.9 427.0,117.7 426.5,120.9 426.0,120.8 425.5,117.4 425.0,111.5 424.5,103.2 424.0,100.9 423.5,99.1 423.0,99.2 422.5,99.6 422.0,100.7 421.5,113.3 421.0,126.0 420.5,136.4 420.0,141.8 419.5,142.6 419.0,138.9 418.5,130.2 418.0,118.2 417.5,105.2 417.0,99.4 416.5,98.6 416.0,105.7 415.5,114.5 415.0,121.6 414.5,125.5 414.0,123.2 413.5,117.4 413.0,109.4 412.5,102.3 412.0,110.8 411.5,118.4 411.0,123.6 410.5,125.2 410.0,122.0 409.5,115.7 409.0,107.4 408.5,101.4 408.0,100.9 407.5,100.5 407.0,101.6 406.5,102.6 406.0,103.0 405.5,106.4 405.0,109.0 404.5,110.0 404.0,108.4 403.5,105.2 403.0,101.6 402.5,101.9 402.0,105.2 401.5,108.1 401.0,109.3 400.5,108.3 400.0,105.8 399.5,102.6 399.0,102.1 398.5,101.3 398.0,100.7 397.5,101.6 397.0,103.4 396.5,109.1 396.0,113.0 395.5,114.6 395.0,113.6 394.5,110.2 394.0,105.3 393.5,102.3 393.0,102.6 392.5,104.7 392.0,108.1 391.5,110.2 391.0,110.0 390.5,107.5 390.0,103.8 389.5,100.3 389.0,100.2 388.5,100.7 388.0,104.2 387.5,109.4 387.0,113.2 386.5,114.7 386.0,113.5 385.5,110.0 385.0,105.1 384.5,101.5 384.0,102.0 383.5,102.4 383.0,102.4 382.5,102.6 382.0,103.9 381.5,104.2 381.0,103.3 380.5,104.3 380.0,110.5 379.5,115.6 379.0,118.3 378.5,117.6 378.0,116.3 377.5,116.6 377.0,114.2 376.5,109.7 376.0,104.1 375.5,101.0 375.0,101.8 374.5,102.5 374.0,104.9 373.5,107.2 373.0,107.8 372.5,106.6 372.0,104.1 371.5,101.3 371.0,101.2 370.5,102.3 370.0,105.7 369.5,108.9 369.0,110.3 368.5,109.2 368.0,106.5 367.5,102.8 367.0,102.3 366.5,102.5 366.0,102.4 365.5,102.1 365.0,102.2 364.5,102.0 364.0,106.8 363.5,112.1 363.0,115.7 362.5,116.7 362.0,114.8 361.5,110.5 361.0,104.8 360.5,102.1 360.0,102.1 359.5,101.2 359.0,100.7 358.5,100.9 358.0,101.2 357.5,101.4 357.0,101.6 356.5,104.0 356.0,106.4 355.5,107.7 355.0,107.6 354.5,106.0 354.0,103.4 353.5,101.8 353.0,101.7 352.5,105.0 352.0,109.5 351.5,112.7 351.0,113.6 350.5,112.0 350.0,108.3 349.5,103.5 349.0,101.4 348.5,100.8 348.0,100.7 347.5,101.2 347.0,101.7 346.5,101.7 346.0,101.0 345.5,103.5 345.0,106.1 344.5,107.8 344.0,108.1 343.5,106.7 343.0,103.8 342.5,102.9 342.0,103.5 341.5,109.8 341.0,115.3 340.5,118.5 340.0,118.3 339.5,114.9 339.0,109.2 338.5,102.8 338.0,101.4 337.5,102.0 337.0,101.6 336.5,101.0 336.0,100.4 335.5,102.4 335.0,106.4 334.5,109.1 334.0,109.6 333.5,108.2 333.0,105.3 332.5,102.8 332.0,101.4 331.5,101.7 331.0,102.3 330.5,106.5 330.0,109.9 329.5,111.4 329.0,110.1 328.5,106.9 328.0,103.0 327.5,101.9 327.0,102.4 326.5,102.7 326.0,102.6 325.5,102.2 325.0,104.9 324.5,107.0 324.0,107.8 323.5,107.2 323.0,105.1 322.5,102.5 322.0,102.3 321.5,102.4 321.0,102.0 320.5,101.5 320.0,101.8 319.5,102.8 319.0,103.5 318.5,105.9 318.0,107.5 317.5,107.7 317.0,106.4 316.5,103.9 316.0,102.7 315.5,101.8 315.0,101.5 314.5,101.6 314.0,105.0 313.5,107.8 313.0,108.7 312.5,107.8 312.0,105.3 311.5,102.3 311.0,101.7 310.5,102.3 310.0,103.3 309.5,104.1 309.0,105.0 308.5,105.0 308.0,104.1 307.5,102.6 307.0,101.7 306.5,100.9 306.0,101.1 305.5,101.9 305.0,103.6 304.5,107.1 304.0,109.2 303.5,109.5 303.0,108.1 302.5,105.2 302.0,102.4 301.5,102.6 301.0,103.5 300.5,103.6 300.0,103.1 299.5,102.1 299.0,102.7 298.5,103.4 298.0,103.9 297.5,105.9 297.0,106.8 296.5,106.5 296.0,105.0 295.5,102.7 295.0,101.7 294.5,101.5 294.0,102.2 293.5,104.7 293.0,106.6 292.5,107.3 292.0,106.6 291.5,104.3 291.0,102.0 290.5,101.6 290.0,101.5 289.5,102.0 289.0,102.2 288.5,101.7 288.0,102.2 287.5,104.3 287.0,105.9 286.5,106.4 286.0,105.6 285.5,103.7 285.0,106.5 284.5,108.4 284.0,108.6 283.5,107.1 283.0,104.1 282.5,102.9 282.0,103.0 281.5,102.6 281.0,102.0 280.5,101.9 280.0,102.1 279.5,102.9 279.0,104.8 278.5,105.9 278.0,105.9 277.5,104.8 277.0,102.9 276.5,102.0 276.0,102.3 275.5,102.5 275.0,102.3 274.5,103.9 274.0,107.8 273.5,110.1 273.0,110.4 272.5,108.8 272.0,105.6 271.5,103.1 271.0,103.1 270.5,102.5 270.0,101.5 269.5,100.5 269.0,102.6 268.5,106.4 268.0,109.0 267.5,109.6 267.0,108.4 266.5,105.7 266.0,103.5 265.5,102.7 265.0,102.9 264.5,103.2 264.0,102.9 263.5,102.2 263.0,101.3 262.5,102.2 262.0,105.4 261.5,108.6 261.0,110.4 260.5,110.1 260.0,108.0 259.5,104.6 259.0,103.0 258.5,101.7 258.0,100.4 257.5,100.5 257.0,100.7 256.5,102.5 256.0,106.4 255.5,108.9 255.0,109.6 254.5,108.5 254.0,105.3 253.5,101.4 253.0,101.2 252.5,101.5 252.0,101.6 251.5,104.2 251.0,106.7 250.5,107.9 250.0,107.7 249.5,105.8 249.0,102.5 248.5,101.5 248.0,101.8 247.5,102.0 247.0,103.5 246.5,105.2 246.0,105.9 245.5,105.0 245.0,103.2 244.5,101.1 244.0,100.9 243.5,101.7 243.0,107.5 242.5,112.6 242.0,115.8 241.5,116.3 241.0,113.6 240.5,108.9 240.0,104.5 239.5,106.3 239.0,106.9 238.5,105.9 238.0,103.8 237.5,100.9 237.0,100.7 236.5,101.3 236.0,103.1 235.5,104.6 235.0,105.3 234.5,104.6 234.0,103.5 233.5,102.9 233.0,102.2 232.5,106.6 232.0,110.5 231.5,112.8 231.0,112.7 230.5,110.0 230.0,105.6 229.5,101.6 229.0,101.3 228.5,103.0 228.0,104.5 227.5,105.3 227.0,105.0 226.5,103.5 226.0,102.4 225.5,102.6 225.0,105.8 224.5,111.1 224.0,115.0 223.5,116.4 223.0,114.8 222.5,110.6 222.0,104.6 221.5,100.2 221.0,99.9 220.5,100.2 220.0,101.2 219.5,103.6 219.0,105.4 218.5,105.8 218.0,104.6 217.5,102.6 217.0,101.1 216.5,102.3 216.0,106.4 215.5,109.9 215.0,111.4 214.5,110.7 214.0,107.0 213.5,102.2 213.0,99.7 212.5,99.3 212.0,99.2 211.5,99.9 211.0,102.2 210.5,108.2 210.0,112.6 209.5,114.8 209.0,114.2 208.5,111.2 208.0,106.5 207.5,102.0 207.0,102.8 206.5,105.5 206.0,107.3 205.5,107.6 205.0,105.6 204.5,102.5 204.0,100.8 203.5,100.1 203.0,100.7 202.5,104.0 202.0,107.8 201.5,109.6 201.0,109.1 200.5,107.0 200.0,103.8 199.5,101.7 199.0,104.4 198.5,109.5 198.0,113.5 197.5,115.0 197.0,113.9 196.5,110.3 196.0,104.1 195.5,100.5 195.0,100.4 194.5,100.2 194.0,99.9 193.5,101.4 193.0,109.5 192.5,116.8 192.0,120.7 191.5,121.0 191.0,118.0 190.5,114.2 190.0,118.8 189.5,120.4 189.0,118.7 188.5,113.7 188.0,105.9 187.5,99.2 187.0,97.7 186.5,98.0 186.0,98.6 185.5,99.5 185.0,102.4 184.5,112.2 184.0,120.3 183.5,125.3 183.0,126.6 182.5,124.2 182.0,118.4 181.5,110.4 181.0,102.6 180.5,102.3 180.0,100.9 179.5,100.3 179.0,99.6 178.5,99.1 178.0,99.4 177.5,101.1 177.0,102.5 176.5,109.7 176.0,120.2 175.5,128.8 175.0,134.2 174.5,135.6 174.0,132.5 173.5,125.6 173.0,116.0 172.5,104.3 172.0,100.4 171.5,98.8 171.0,97.4 170.5,97.4 170.0,98.4 169.5,107.3 169.0,118.7 168.5,128.3 168.0,133.4 167.5,134.2 167.0,130.4 166.5,122.2 166.0,111.9 165.5,101.4 165.0,101.1 164.5,101.5 164.0,100.7 163.5,103.3 163.0,106.3 162.5,108.2 162.0,107.9 161.5,104.6 161.0,100.7 160.5,108.4 160.0,116.3 159.5,122.1 159.0,124.9 158.5,123.7 158.0,118.3 157.5,110.6 157.0,102.6 156.5,101.6 156.0,101.5 155.5,101.4 155.0,101.9 154.5,105.6 154.0,108.5 153.5,109.6 153.0,108.8 152.5,105.8 152.0,102.0 151.5,101.3 151.0,101.4 150.5,103.6 150.0,105.5 149.5,105.9 149.0,104.7 148.5,102.6 148.0,101.7 147.5,100.7 147.0,100.8 146.5,100.7 146.0,100.6 145.5,101.3 145.0,102.6 144.5,103.7 144.0,103.6 143.5,108.5 143.0,113.4 142.5,116.1 142.0,116.1 141.5,113.2 141.0,108.3 140.5,102.7 140.0,102.5 139.5,102.7 139.0,103.3 138.5,103.3 138.0,102.8 137.5,102.2 137.0,101.6 136.5,101.0 136.0,101.3 135.5,102.4 135.0,103.8 134.5,107.6 134.0,109.9 133.5,110.5 133.0,108.5 132.5,104.5 132.0,100.2 131.5,99.0 131.0,99.9 130.5,101.0 130.0,102.0 129.5,102.6 129.0,104.2 128.5,107.3 128.0,109.3 127.5,109.5 127.0,107.9 126.5,110.3 126.0,111.3 125.5,109.9 125.0,106.9 124.5,103.0 124.0,102.9 123.5,104.9 123.0,105.9 122.5,105.9 122.0,104.7 121.5,103.2 121.0,102.8 120.5,102.1 120.0,101.5 119.5,102.4 119.0,109.0 118.5,114.7 118.0,118.0 117.5,118.4 117.0,115.0 116.5,109.2 116.0,102.5 115.5,100.4 115.0,101.1 114.5,101.8 114.0,102.2 113.5,101.7 113.0,104.4 112.5,109.6 112.0,113.6 111.5,115.4 111.0,114.4 110.5,110.9 110.0,105.8 109.5,102.2 109.0,101.7 108.5,101.7 108.0,102.0 107.5,102.0 107.0,102.3 106.5,102.4 106.0,102.1 105.5,101.5 105.0,101.0 104.5,100.5 104.0,100.3 103.5,101.2 103.0,106.9 102.5,112.4 102.0,115.9 101.5,116.7 101.0,114.7 100.5,110.2 100.0,104.5 99.5,101.8 99.0,102.9 98.5,104.3 98.0,105.1 97.5,104.5 97.0,103.1 96.5,103.0 96.0,105.2 95.5,106.6 95.0,106.1 94.5,103.5 94.0,100.6 93.5,100.4 93.0,100.1 92.5,100.1 92.0,107.5 91.5,114.7 91.0,119.0 90.5,120.0 90.0,117.7 89.5,112.7 89.0,108.3 88.5,109.6 88.0,108.8 87.5,106.4 87.0,103.2 86.5,102.0 86.0,102.3 85.5,102.0 85.0,101.4 84.5,101.4 84.0,101.6 83.5,103.4 83.0,106.4 82.5,108.1 82.0,107.9 81.5,106.2 81.0,103.5 80.5,101.1 80.0,100.8 79.5,100.6 79.0,101.6 78.5,104.8 78.0,107.4 77.5,108.2 77.0,107.2 76.5,104.9 76.0,102.1 75.5,101.6 75.0,101.8 74.5,102.6 74.0,103.2 73.5,103.3 73.0,102.9 72.5,101.9 72.0,101.2 71.5,101.6 71.0,102.0 70.5,102.3 70.0,103.5 69.5,103.9 69.0,103.6 68.5,103.3 68.0,102.7 67.5,101.8 67.0,101.4 66.5,102.3 66.0,103.6 65.5,104.5 65.0,104.5 64.5,103.8 64.0,102.6 63.5,102.3 63.0,101.7 62.5,101.5 62.0,102.2 61.5,105.0 61.0,107.3 60.5,108.2 60.0,107.5 59.5,105.4 59.0,102.5 58.5,101.7 58.0,101.5 57.5,102.6 57.0,103.6 56.5,105.5 56.0,106.4 55.5,105.9 55.0,104.2 54.5,103.2 54.0,102.9 53.5,102.4 53.0,102.5 52.5,102.6 52.0,103.5 51.5,105.7 51.0,106.8 50.5,106.7 50.0,105.0 49.5,102.7 49.0,101.3 48.5,101.7 48.0,101.8 47.5,102.4 47.0,104.7 46.5,106.4 46.0,106.9 45.5,106.1 45.0,104.1 44.5,102.3 44.0,102.3 43.5,103.4 43.0,103.9 42.5,103.9 42.0,105.4 41.5,106.0 41.0,105.5 40.5,103.7 40.0,101.8 39.5,102.0 39.0,102.4 38.5,102.5 38.0,102.0 37.5,103.1 37.0,104.5 36.5,105.1 36.0,104.7 35.5,102.9 35.0,101.1 34.5,101.6 34.0,102.0 33.5,105.4 33.0,108.4 32.5,109.3 32.0,108.3 31.5,105.8 31.0,102.8 30.5,102.1 30.0,102.0 29.5,102.8 29.0,103.3 28.5,103.3 28.0,102.7 27.5,102.8 27.0,102.5 26.5,102.0 26.0,102.8 25.5,103.3 25.0,103.2 24.5,102.5 24.0,101.9 23.5,101.9 23.0,102.6 22.5,104.3 22.0,105.5 21.5,105.8 21.0,105.0 20.5,103.2 20.0,101.7 19.5,101.7 19.0,101.4 18.5,102.0 18.0,102.5 17.5,103.3 17.0,103.9 16.5,103.6 16.0,102.8 15.5,101.6 15.0,101.8 14.5,103.9 14.0,105.5 13.5,106.0 13.0,105.3 12.5,103.7 12.0,104.7 11.5,104.8 11.0,103.9 10.5,102.8 10.0,102.3 9.5,101.7 9.0,103.0 8.5,103.5 8.0,105.6 7.5,107.3 7.0,107.5 6.5,106.3 6.0,104.1 5.5,102.4 5.0,102.1 4.5,102.3 4.0,102.4 3.5,102.1 3.0,104.0 2.5,105.6 2.0,106.3 1.5,105.8 1.0,104.3 0.5,102.0 0.0,101.5Z" fill="url(#wg)" filter="url(#wb)"/><path d="M0.0,99.6 0.5,98.6 1.0,98.6 1.5,99.7 2.0,94.6 2.5,92.8 3.0,97.0 3.5,99.7 4.0,99.7 4.5,99.2 5.0,99.1 5.5,99.6 6.0,96.6 6.5,94.9 7.0,98.0 7.5,98.9 8.0,99.7 8.5,99.7 9.0,99.7 9.5,98.4 10.0,94.9 10.5,91.6 11.0,94.9 11.5,99.9 12.0,98.1 12.5,97.1 13.0,98.5 13.5,99.9 14.0,99.0 14.5,96.9 15.0,95.8 15.5,98.2 16.0,99.7 16.5,99.0 17.0,98.8 17.5,99.4 18.0,95.7 18.5,95.3 19.0,98.6 19.5,99.7 20.0,99.7 20.5,99.1 21.0,97.7 21.5,97.9 22.0,95.9 22.5,97.4 23.0,99.7 23.5,98.7 24.0,98.2 24.5,99.2 25.0,99.7 25.5,99.0 26.0,98.0 26.5,95.4 27.0,96.8 27.5,99.7 28.0,99.3 28.5,97.7 29.0,98.0 29.5,99.4 30.0,98.3 30.5,98.0 31.0,96.5 31.5,98.1 32.0,99.9 32.5,100.1 33.0,99.3 33.5,99.3 34.0,93.6 34.5,88.7 35.0,92.2 35.5,97.5 36.0,99.3 36.5,99.9 37.0,99.5 37.5,98.1 38.0,98.2 38.5,99.6 39.0,98.4 39.5,95.4 40.0,95.0 40.5,98.6 41.0,99.7 41.5,100.0 42.0,98.2 42.5,97.9 43.0,99.3 43.5,98.6 44.0,97.4 44.5,96.6 45.0,98.7 45.5,99.5 46.0,99.2 46.5,99.2 47.0,99.6 47.5,99.7 48.0,99.7 48.5,99.0 49.0,97.0 49.5,95.4 50.0,97.7 50.5,99.9 51.0,99.4 51.5,99.1 52.0,99.7 52.5,99.6 53.0,97.8 53.5,97.6 54.0,97.1 54.5,94.6 55.0,96.6 55.5,99.8 56.0,98.9 56.5,98.5 57.0,99.6 57.5,99.0 58.0,98.8 58.5,96.7 59.0,96.6 59.5,98.5 60.0,98.2 60.5,99.6 61.0,99.8 61.5,99.7 62.0,99.7 62.5,99.4 63.0,95.7 63.5,94.8 64.0,98.3 64.5,99.4 65.0,98.2 65.5,98.4 66.0,99.7 66.5,99.6 67.0,96.9 67.5,95.8 68.0,97.8 68.5,99.5 69.0,98.4 69.5,98.6 70.0,99.7 70.5,99.7 71.0,95.7 71.5,93.3 72.0,96.4 72.5,99.7 73.0,99.5 73.5,98.5 74.0,98.7 74.5,99.7 75.0,98.6 75.5,98.2 76.0,98.9 76.5,99.3 77.0,99.8 77.5,100.2 78.0,99.2 78.5,97.8 79.0,91.5 79.5,88.4 80.0,93.9 80.5,99.7 81.0,98.9 81.5,98.4 82.0,99.5 82.5,99.4 83.0,98.1 83.5,98.7 84.0,91.4 84.5,89.9 85.0,96.0 85.5,99.1 86.0,98.4 86.5,98.8 87.0,95.3 87.5,95.6 88.0,99.5 88.5,100.1 89.0,99.8 89.5,99.7 90.0,99.3 90.5,100.0 91.0,100.8 91.5,99.7 92.0,97.9 92.5,93.0 93.0,80.3 93.5,78.6 94.0,89.3 94.5,99.1 95.0,99.0 95.5,99.7 96.0,95.8 96.5,92.4 97.0,95.2 97.5,98.5 98.0,99.2 98.5,98.4 99.0,96.6 99.5,97.7 100.0,97.5 100.5,99.2 101.0,100.1 101.5,100.2 102.0,100.1 102.5,99.7 103.0,99.7 103.5,99.2 104.0,92.4 104.5,88.3 105.0,92.8 105.5,99.7 106.0,99.7 106.5,97.7 107.0,97.2 107.5,99.1 108.0,94.3 108.5,92.6 109.0,96.8 109.5,99.7 110.0,99.7 110.5,99.4 111.0,99.7 111.5,99.8 112.0,99.0 112.5,99.5 113.0,98.3 113.5,97.4 114.0,98.7 114.5,99.7 115.0,93.3 115.5,85.1 116.0,87.0 116.5,97.1 117.0,99.4 117.5,99.2 118.0,99.8 118.5,99.9 119.0,99.7 119.5,98.0 120.0,92.4 120.5,92.6 121.0,98.3 121.5,99.7 122.0,99.5 122.5,98.6 123.0,98.7 123.5,99.7 124.0,99.7 124.5,96.4 125.0,94.1 125.5,97.2 126.0,100.6 126.5,100.1 127.0,99.4 127.5,99.5 128.0,99.7 128.5,99.1 129.0,98.4 129.5,99.0 130.0,99.7 130.5,97.5 131.0,84.9 131.5,80.8 132.0,88.6 132.5,99.6 133.0,99.9 133.5,100.5 134.0,99.1 134.5,98.3 135.0,99.4 135.5,97.0 136.0,92.0 136.5,93.2 137.0,99.3 137.5,99.6 138.0,98.7 138.5,98.8 139.0,99.7 139.5,99.7 140.0,99.7 140.5,99.0 141.0,98.4 141.5,99.3 142.0,101.0 142.5,100.8 143.0,98.6 143.5,98.5 144.0,99.7 144.5,99.7 145.0,98.7 145.5,93.9 146.0,90.4 146.5,94.4 147.0,96.7 147.5,90.9 148.0,92.1 148.5,98.8 149.0,99.7 149.5,98.6 150.0,97.8 150.5,98.9 151.0,89.8 151.5,86.9 152.0,93.2 152.5,98.8 153.0,100.1 153.5,100.4 154.0,99.9 154.5,99.1 155.0,97.1 155.5,92.7 156.0,94.1 156.5,99.6 157.0,98.5 157.5,98.0 158.0,99.1 158.5,101.4 159.0,100.9 159.5,99.8 160.0,84.7 160.5,76.9 161.0,82.4 161.5,96.8 162.0,99.1 162.5,100.4 163.0,89.3 163.5,81.2 164.0,85.0 164.5,93.5 165.0,81.8 165.5,80.8 166.0,91.3 166.5,97.9 167.0,100.7 167.5,103.0 168.0,102.1 168.5,100.3 169.0,99.7 169.5,99.7 170.0,81.1 170.5,67.6 171.0,68.9 171.5,84.3 172.0,99.7 172.5,99.7 173.0,98.9 173.5,98.9 174.0,102.0 174.5,102.7 175.0,100.5 175.5,98.9 176.0,99.6 176.5,99.7 177.0,99.7 177.5,96.9 178.0,81.0 178.5,74.0 179.0,81.1 179.5,97.0 180.0,98.8 180.5,99.2 181.0,99.7 181.5,99.7 182.0,99.2 182.5,100.3 183.0,101.9 183.5,101.3 184.0,98.2 184.5,98.5 185.0,99.7 185.5,92.8 186.0,75.5 186.5,69.1 187.0,78.0 187.5,96.0 188.0,99.7 188.5,97.9 189.0,98.9 189.5,101.3 190.0,101.0 190.5,99.7 191.0,99.8 191.5,101.1 192.0,101.5 192.5,100.1 193.0,99.7 193.5,93.7 194.0,78.1 194.5,73.2 195.0,82.6 195.5,99.0 196.0,98.9 196.5,99.0 197.0,100.5 197.5,101.1 198.0,100.1 198.5,97.2 199.0,96.7 199.5,99.0 200.0,99.7 200.5,99.2 201.0,99.5 201.5,100.2 202.0,99.5 202.5,99.0 203.0,91.8 203.5,81.0 204.0,81.5 204.5,92.9 205.0,98.6 205.5,98.7 206.0,99.6 206.5,99.7 207.0,99.4 207.5,98.6 208.0,96.8 208.5,94.9 209.0,98.4 209.5,100.2 210.0,99.7 210.5,99.7 211.0,99.7 211.5,99.3 212.0,85.1 212.5,77.7 213.0,83.3 213.5,97.5 214.0,98.5 214.5,98.7 215.0,100.2 215.5,100.0 216.0,97.9 216.5,95.0 217.0,96.3 217.5,99.1 218.0,99.7 218.5,99.9 219.0,99.5 219.5,98.7 220.0,88.2 220.5,82.6 221.0,88.3 221.5,97.4 222.0,98.9 222.5,99.7 223.0,100.5 223.5,100.3 224.0,98.5 224.5,94.9 225.0,96.6 225.5,99.5 226.0,98.5 226.5,98.6 227.0,99.7 227.5,98.9 228.0,92.1 228.5,88.3 229.0,93.4 229.5,99.7 230.0,99.2 230.5,99.0 231.0,100.4 231.5,100.7 232.0,94.9 232.5,93.5 233.0,97.6 233.5,99.0 234.0,99.6 234.5,99.1 235.0,98.7 235.5,99.3 236.0,90.7 236.5,87.6 237.0,93.5 237.5,98.9 238.0,99.6 238.5,99.7 239.0,98.9 239.5,97.3 240.0,95.1 240.5,94.5 241.0,98.8 241.5,100.0 242.0,100.1 242.5,99.7 243.0,99.7 243.5,99.2 244.0,93.9 244.5,89.2 245.0,92.6 245.5,99.8 246.0,99.5 246.5,99.2 247.0,99.6 247.5,99.2 248.0,95.6 248.5,95.4 249.0,98.9 249.5,99.6 250.0,100.0 250.5,99.1 251.0,91.1 251.5,89.7 252.0,96.1 252.5,89.8 253.0,88.0 253.5,94.8 254.0,98.7 254.5,99.9 255.0,100.4 255.5,99.2 256.0,97.1 256.5,97.8 257.0,93.6 257.5,87.6 258.0,90.7 258.5,99.1 259.0,99.3 259.5,99.1 260.0,97.7 260.5,98.8 261.0,100.5 261.5,99.7 262.0,99.7 262.5,99.2 263.0,94.0 263.5,92.7 264.0,97.3 264.5,99.7 265.0,98.2 265.5,98.1 266.0,99.5 266.5,99.2 267.0,98.8 267.5,99.8 268.0,100.1 268.5,99.7 269.0,97.9 269.5,90.8 270.0,90.3 270.5,96.9 271.0,99.7 271.5,98.7 272.0,97.8 272.5,98.8 273.0,100.5 273.5,100.3 274.0,97.9 274.5,97.6 275.0,93.5 275.5,91.8 276.0,96.6 276.5,98.2 277.0,97.8 277.5,99.3 278.0,99.9 278.5,99.7 279.0,99.0 279.5,99.2 280.0,99.7 280.5,99.3 281.0,97.7 281.5,96.8 282.0,91.9 282.5,93.4 283.0,99.5 283.5,98.4 284.0,98.9 284.5,100.0 285.0,98.5 285.5,97.8 286.0,98.9 286.5,100.0 287.0,95.3 287.5,90.5 288.0,93.3 288.5,98.0 289.0,99.7 289.5,99.7 290.0,99.4 290.5,99.0 291.0,99.3 291.5,99.7 292.0,99.4 292.5,98.4 293.0,94.3 293.5,90.4 294.0,94.3 294.5,99.7 295.0,98.6 295.5,98.2 296.0,99.2 296.5,97.8 297.0,97.6 297.5,99.2 298.0,99.7 298.5,99.7 299.0,95.2 299.5,93.3 300.0,96.9 300.5,99.7 301.0,99.4 301.5,98.7 302.0,99.0 302.5,99.7 303.0,99.7 303.5,100.4 304.0,100.0 304.5,98.9 305.0,99.1 305.5,97.4 306.0,92.1 306.5,92.9 307.0,97.4 307.5,99.0 308.0,99.7 308.5,99.0 309.0,98.9 309.5,99.6 310.0,99.7 310.5,99.5 311.0,97.6 311.5,94.2 312.0,95.6 312.5,99.9 313.0,99.5 313.5,99.2 314.0,99.6 314.5,94.9 315.0,91.6 315.5,95.0 316.0,99.1 316.5,99.4 317.0,99.7 317.5,100.1 318.0,98.4 318.5,97.2 319.0,98.8 319.5,99.7 320.0,97.7 320.5,95.0 321.0,96.4 321.5,99.5 322.0,98.8 322.5,98.4 323.0,99.3 323.5,99.9 324.0,100.1 324.5,99.1 325.0,99.1 325.5,99.6 326.0,95.1 326.5,91.6 327.0,94.8 327.5,98.8 328.0,99.7 328.5,99.7 329.0,100.0 329.5,99.7 330.0,98.9 330.5,95.8 331.0,86.9 331.5,86.8 332.0,95.6 332.5,98.1 333.0,99.6 333.5,99.8 334.0,98.8 334.5,98.2 335.0,99.2 335.5,97.1 336.0,87.0 336.5,85.1 337.0,93.3 337.5,99.7 338.0,96.7 338.5,90.2 339.0,90.9 339.5,98.5 340.0,101.4 340.5,101.3 341.0,99.3 341.5,98.5 342.0,99.1 342.5,99.7 343.0,98.3 343.5,97.8 344.0,99.6 344.5,96.9 345.0,91.1 345.5,92.7 346.0,99.3 346.5,99.7 347.0,99.7 347.5,97.0 348.0,91.3 348.5,92.2 349.0,98.7 349.5,98.7 350.0,98.2 350.5,99.7 351.0,100.9 351.5,100.3 352.0,98.6 352.5,98.6 353.0,99.6 353.5,99.7 354.0,99.7 354.5,98.9 355.0,98.3 355.5,99.1 356.0,99.7 356.5,98.9 357.0,98.3 357.5,97.8 358.0,88.1 358.5,86.0 359.0,93.5 359.5,99.2 360.0,99.0 360.5,99.5 361.0,99.6 361.5,99.0 362.0,98.8 362.5,99.2 363.0,97.7 363.5,98.4 364.0,98.6 364.5,99.3 365.0,99.7 365.5,99.7 366.0,99.1 366.5,97.3 367.0,92.0 367.5,87.5 368.0,92.1 368.5,100.0 369.0,99.8 369.5,99.5 370.0,99.7 370.5,98.2 371.0,95.0 371.5,93.4 372.0,97.2 372.5,99.7 373.0,99.7 373.5,97.8 374.0,97.9 374.5,92.7 375.0,92.3 375.5,97.8 376.0,99.3 376.5,98.8 377.0,92.9 377.5,92.9 378.0,98.3 378.5,100.0 379.0,101.0 379.5,97.5 380.0,94.1 380.5,96.3 381.0,99.7 381.5,99.7 382.0,99.3 382.5,98.6 383.0,91.4 383.5,88.4 384.0,94.0 384.5,99.1 385.0,98.9 385.5,99.5 386.0,100.5 386.5,100.6 387.0,99.5 387.5,99.3 388.0,99.7 388.5,99.7 389.0,90.9 389.5,85.5 390.0,90.3 390.5,99.7 391.0,100.4 391.5,99.9 392.0,98.5 392.5,99.0 393.0,99.0 393.5,97.3 394.0,97.9 394.5,98.7 395.0,100.5 395.5,99.7 396.0,97.7 396.5,98.3 397.0,99.7 397.5,92.4 398.0,88.3 398.5,92.9 399.0,95.9 399.5,89.4 400.0,90.7 400.5,98.2 401.0,99.3 401.5,99.8 402.0,99.7 402.5,99.6 403.0,93.2 403.5,90.9 404.0,95.9 404.5,100.5 405.0,94.1 405.5,90.8 406.0,95.3 406.5,99.7 407.0,94.9 407.5,88.7 408.0,90.7 408.5,98.2 409.0,99.7 409.5,98.9 410.0,99.8 410.5,102.0 411.0,101.9 411.5,99.2 412.0,82.9 412.5,74.7 413.0,80.5 413.5,96.0 414.0,100.0 414.5,100.6 415.0,101.0 415.5,97.9 416.0,79.3 416.5,68.5 417.0,72.9 417.5,89.6 418.0,99.7 418.5,99.8 419.0,102.4 419.5,103.6 420.0,103.4 420.5,101.6 421.0,99.7 421.5,98.4 422.0,81.8 422.5,68.4 423.0,69.7 423.5,85.0 424.0,98.7 424.5,99.2 425.0,99.7 425.5,99.1 426.0,99.6 426.5,100.7 427.0,100.3 427.5,99.5 428.0,98.8 428.5,99.0 429.0,99.7 429.5,92.6 430.0,73.9 430.5,66.1 431.0,74.1 431.5,92.8 432.0,101.2 432.5,102.1 433.0,100.4 433.5,98.5 434.0,99.4 434.5,99.6 435.0,99.1 435.5,99.2 436.0,99.7 436.5,99.8 437.0,99.7 437.5,97.6 438.0,83.9 438.5,78.5 439.0,85.9 439.5,99.4 440.0,99.5 440.5,101.0 441.0,101.8 441.5,100.1 442.0,98.6 442.5,98.2 443.0,99.3 443.5,99.7 444.0,98.5 444.5,98.4 445.0,99.3 445.5,99.1 446.0,89.1 446.5,85.7 447.0,92.2 447.5,99.7 448.0,100.3 448.5,99.8 449.0,99.2 449.5,99.6 450.0,99.7 450.5,98.5 451.0,98.3 451.5,98.3 452.0,98.1 452.5,99.9 453.0,99.9 453.5,99.5 454.0,92.8 454.5,87.5 455.0,91.3 455.5,99.1 456.0,98.7 456.5,99.5 457.0,99.8 457.5,99.7 458.0,96.0 458.5,94.1 459.0,97.1 459.5,99.7 460.0,99.6 460.5,98.6 461.0,98.4 461.5,97.6 462.0,93.1 462.5,94.1 463.0,98.9 463.5,99.0 464.0,99.8 464.5,99.6 465.0,99.0 465.5,98.7 466.0,97.4 466.5,98.2 467.0,99.4 467.5,99.3 468.0,99.8 468.5,99.9 469.0,99.0 469.5,97.9 470.0,95.1 470.5,92.4 471.0,95.9 471.5,99.6 472.0,99.3 472.5,99.2 473.0,99.6 473.5,99.7 474.0,98.6 474.5,97.3 475.0,98.4 475.5,99.7 476.0,100.0 476.5,98.8 477.0,98.2 477.5,99.3 478.0,92.4 478.5,85.7 479.0,89.0 479.5,98.6 480.0,99.9 480.5,99.6 481.0,98.2 481.5,98.8 482.0,99.7 482.5,99.5 483.0,94.6 483.5,93.6 484.0,97.8 484.5,99.7 485.0,99.7 485.5,99.0 486.0,96.2 486.5,95.0 487.0,98.0 487.5,99.7 488.0,97.0 488.5,93.3 489.0,95.2 489.5,99.7 490.0,99.6 490.5,98.8 491.0,99.7 491.5,101.1 492.0,97.3 492.5,94.1 493.0,96.7 L493.0,101.1 492.5,101.4 492.0,110.1 491.5,116.2 491.0,111.6 490.5,101.0 490.0,101.0 489.5,101.4 489.0,102.0 488.5,102.6 488.0,104.1 487.5,102.3 487.0,102.6 486.5,102.4 486.0,101.0 485.5,100.9 485.0,102.7 484.5,102.9 484.0,101.8 483.5,100.4 483.0,100.5 482.5,101.4 482.0,101.5 481.5,101.1 481.0,104.2 480.5,107.5 480.0,105.1 479.5,101.4 479.0,99.8 478.5,99.4 478.0,100.9 477.5,102.7 477.0,102.0 476.5,105.6 476.0,105.9 475.5,101.9 475.0,101.1 474.5,100.9 474.0,100.9 473.5,101.8 473.0,103.0 472.5,102.6 472.0,100.9 471.5,101.0 471.0,101.7 470.5,102.3 470.0,101.7 469.5,101.7 469.0,102.2 468.5,104.7 468.0,104.6 467.5,101.3 467.0,100.9 466.5,101.3 466.0,102.5 465.5,102.1 465.0,102.4 464.5,105.4 464.0,104.4 463.5,101.8 463.0,101.2 462.5,100.5 462.0,101.3 461.5,102.5 461.0,104.0 460.5,106.9 460.0,104.5 459.5,101.5 459.0,101.0 458.5,100.5 458.0,100.7 457.5,101.4 457.0,104.2 456.5,104.3 456.0,101.4 455.5,101.9 455.0,101.1 454.5,99.7 454.0,100.3 453.5,100.9 453.0,105.1 452.5,108.0 452.0,104.9 451.5,101.6 451.0,101.2 450.5,101.7 450.0,101.4 449.5,101.0 449.0,103.7 448.5,110.5 448.0,110.0 447.5,102.8 447.0,100.2 446.5,99.4 446.0,100.4 445.5,102.7 445.0,102.2 444.5,104.6 444.0,103.6 443.5,101.2 443.0,101.3 442.5,101.1 442.0,100.9 441.5,106.6 441.0,119.6 440.5,122.1 440.0,112.0 439.5,100.9 439.0,99.5 438.5,99.6 438.0,100.3 437.5,101.2 437.0,102.4 436.5,103.9 436.0,102.9 435.5,100.9 435.0,100.9 434.5,102.2 434.0,103.2 433.5,102.6 433.0,116.3 432.5,122.0 432.0,114.8 431.5,101.1 431.0,98.3 430.5,96.8 430.0,98.0 429.5,100.8 429.0,101.3 428.5,100.9 428.0,100.9 427.5,101.7 427.0,107.7 426.5,118.1 426.0,117.8 425.5,106.9 425.0,101.9 424.5,103.4 424.0,102.5 423.5,99.3 423.0,98.4 422.5,99.8 422.0,100.6 421.5,100.9 421.0,102.0 420.5,118.1 420.0,135.3 419.5,138.4 419.0,125.5 418.5,104.3 418.0,102.5 417.5,102.5 417.0,98.9 416.5,97.2 416.0,100.3 415.5,103.4 415.0,114.6 414.5,123.4 414.0,119.0 413.5,104.8 413.0,99.5 412.5,98.0 412.0,100.4 411.5,107.7 411.0,120.5 410.5,122.3 410.0,111.6 409.5,100.9 409.0,101.6 408.5,102.1 408.0,100.6 407.5,99.8 407.0,100.6 406.5,102.7 406.0,102.6 405.5,100.4 405.0,106.7 404.5,109.5 404.0,104.7 403.5,101.1 403.0,100.4 402.5,100.9 402.0,101.9 401.5,103.8 401.0,108.6 400.5,107.0 400.0,100.6 399.5,101.8 399.0,102.2 398.5,100.3 398.0,99.7 397.5,100.7 397.0,102.8 396.5,102.5 396.0,107.8 395.5,113.4 395.0,109.7 394.5,102.3 394.0,101.0 393.5,101.3 393.0,102.4 392.5,102.1 392.0,102.1 391.5,108.4 391.0,109.0 390.5,103.2 390.0,101.0 389.5,100.0 389.0,100.1 388.5,101.5 388.0,101.6 387.5,101.0 387.0,108.2 386.5,113.4 386.0,109.3 385.5,101.5 385.0,100.9 384.5,100.9 384.0,100.9 383.5,102.1 383.0,102.2 382.5,101.1 382.0,103.5 381.5,103.6 381.0,101.8 380.5,100.8 380.0,100.5 379.5,108.2 379.0,116.5 378.5,114.3 378.0,113.6 377.5,114.9 377.0,107.0 376.5,101.6 376.0,100.9 375.5,100.9 375.0,100.3 374.5,101.7 374.0,103.3 373.5,105.3 373.0,107.1 372.5,103.6 372.0,101.2 371.5,100.4 371.0,100.6 370.5,100.9 370.0,102.5 369.5,104.1 369.0,109.3 368.5,107.8 368.0,100.6 367.5,100.5 367.0,102.6 366.5,102.4 366.0,100.9 365.5,101.5 365.0,102.0 364.5,101.4 364.0,100.9 363.5,101.6 363.0,111.7 362.5,115.3 362.0,108.6 361.5,100.9 361.0,101.0 360.5,101.7 360.0,102.0 359.5,101.2 359.0,100.4 358.5,100.4 358.0,101.4 357.5,101.7 357.0,100.9 356.5,101.4 356.0,103.2 355.5,106.7 355.0,106.1 354.5,101.4 354.0,101.1 353.5,101.6 353.0,101.5 352.5,100.9 352.0,100.9 351.5,109.1 351.0,112.4 350.5,106.9 350.0,101.4 349.5,101.9 349.0,101.4 348.5,100.2 348.0,100.1 347.5,101.5 347.0,101.8 346.5,101.2 346.0,100.9 345.5,100.3 345.0,101.8 344.5,107.3 344.0,106.9 343.5,101.6 343.0,100.9 342.5,101.5 342.0,103.0 341.5,102.5 341.0,105.6 340.5,115.7 340.0,116.1 339.5,106.6 339.0,100.3 338.5,100.0 338.0,100.8 337.5,102.1 337.0,102.3 336.5,100.2 336.0,99.6 335.5,101.4 335.0,101.5 334.5,107.0 334.0,108.6 333.5,103.9 333.0,103.4 332.5,102.4 332.0,100.7 331.5,100.5 331.0,102.1 330.5,102.4 330.0,107.5 329.5,110.4 329.0,105.8 328.5,101.5 328.0,102.0 327.5,101.5 327.0,101.5 326.5,102.5 326.0,102.1 325.5,101.0 325.0,100.9 324.5,104.2 324.0,107.2 323.5,104.7 323.0,102.2 322.5,101.0 322.0,101.6 321.5,102.3 321.0,101.5 320.5,100.6 320.0,100.9 319.5,101.6 319.0,102.9 318.5,102.3 318.0,106.2 317.5,106.7 317.0,102.3 316.5,103.0 316.0,102.3 315.5,100.9 315.0,101.4 314.5,101.6 314.0,100.9 313.5,104.6 313.0,108.0 312.5,105.4 312.0,102.3 311.5,101.3 311.0,100.9 310.5,100.9 310.0,101.9 309.5,103.3 309.0,104.2 308.5,104.3 308.0,102.4 307.5,102.2 307.0,100.9 306.5,100.3 306.0,100.2 305.5,101.6 305.0,102.6 304.5,101.9 304.0,107.2 303.5,108.5 303.0,103.7 302.5,101.9 302.0,100.9 301.5,100.9 301.0,102.1 300.5,103.5 300.0,102.4 299.5,100.4 299.0,101.3 298.5,103.4 298.0,102.8 297.5,102.9 297.0,106.2 296.5,104.9 296.0,101.6 295.5,101.6 295.0,100.9 294.5,101.0 294.0,101.6 293.5,101.0 293.0,105.3 292.5,107.0 292.0,103.0 291.5,101.9 291.0,101.1 290.5,100.9 290.0,100.9 289.5,101.0 289.0,101.9 288.5,102.0 288.0,100.5 287.5,100.5 287.0,105.2 286.5,105.9 286.0,102.0 285.5,101.0 285.0,102.6 284.5,106.7 284.0,107.6 283.5,103.0 283.0,100.9 282.5,102.5 282.0,102.7 281.5,101.4 281.0,100.9 280.5,100.9 280.0,101.8 279.5,101.9 279.0,101.5 278.5,105.0 278.0,105.0 277.5,101.6 277.0,101.3 276.5,100.9 276.0,101.7 275.5,102.3 275.0,101.8 274.5,100.9 274.0,101.6 273.5,108.0 273.0,109.2 272.5,103.8 272.0,101.6 271.5,101.8 271.0,103.2 270.5,102.3 270.0,100.0 269.5,100.1 269.0,101.1 268.5,101.5 268.0,106.5 267.5,108.7 267.0,104.6 266.5,103.3 266.0,102.6 265.5,100.9 265.0,101.0 264.5,102.9 264.0,103.0 263.5,100.6 263.0,100.5 262.5,100.9 262.0,102.5 261.5,103.4 261.0,109.1 260.5,108.2 260.0,101.9 259.5,103.2 259.0,102.4 258.5,100.9 258.0,100.0 257.5,100.3 257.0,101.3 256.5,101.1 256.0,100.9 255.5,106.1 255.0,108.8 254.5,105.0 254.0,102.1 253.5,100.6 253.0,100.7 252.5,101.6 252.0,101.4 251.5,99.9 251.0,103.9 250.5,108.0 250.0,105.3 249.5,101.4 249.0,100.9 248.5,100.7 248.0,101.6 247.5,101.9 247.0,101.1 246.5,102.7 246.0,105.5 245.5,104.2 245.0,101.1 244.5,99.8 244.0,100.5 243.5,101.8 243.0,102.2 242.5,103.1 242.0,112.7 241.5,114.5 241.0,106.7 240.5,100.5 240.0,100.6 239.5,104.9 239.0,106.2 238.5,102.8 238.0,100.9 237.5,100.9 237.0,100.5 236.5,100.6 236.0,101.0 235.5,104.6 235.0,104.8 234.5,102.7 234.0,103.1 233.5,101.4 233.0,100.9 232.5,100.4 232.0,104.7 231.5,111.6 231.0,110.1 230.5,102.1 230.0,100.9 229.5,101.6 229.0,101.7 228.5,100.3 228.0,103.5 227.5,105.4 227.0,103.0 226.5,101.2 226.0,101.1 225.5,102.4 225.0,102.2 224.5,100.6 224.0,110.8 223.5,115.0 223.0,109.2 222.5,102.0 222.0,100.9 221.5,100.9 221.0,99.7 220.5,99.2 220.0,101.2 219.5,102.2 219.0,105.2 218.5,104.7 218.0,101.5 217.5,101.2 217.0,100.8 216.5,100.6 216.0,100.9 215.5,105.3 215.0,110.3 214.5,107.9 214.0,100.9 213.5,101.7 213.0,100.3 212.5,98.8 212.0,99.3 211.5,100.9 211.0,101.6 210.5,101.7 210.0,105.7 209.5,113.1 209.0,111.7 208.5,102.6 208.0,101.3 207.5,101.2 207.0,102.1 206.5,101.9 206.0,105.3 205.5,107.1 205.0,103.5 204.5,102.7 204.0,100.2 203.5,98.8 203.0,100.2 202.5,102.7 202.0,103.8 201.5,108.6 201.0,107.1 200.5,101.1 200.0,101.2 199.5,101.6 199.0,101.3 198.5,100.9 198.0,108.4 197.5,113.7 197.0,109.6 196.5,100.9 196.0,100.9 195.5,100.9 195.0,100.9 194.5,100.1 194.0,99.0 193.5,100.4 193.0,101.0 192.5,106.2 192.0,117.4 191.5,118.4 191.0,108.5 190.5,102.6 190.0,113.0 189.5,118.7 189.0,112.8 188.5,102.6 188.0,101.8 187.5,100.7 187.0,98.4 186.5,97.2 186.0,98.9 185.5,101.8 185.0,101.6 184.5,100.9 184.0,104.8 183.5,119.3 183.0,124.3 182.5,115.8 182.0,101.0 181.5,101.5 181.0,102.4 180.5,101.8 180.0,100.9 179.5,102.0 179.0,100.3 178.5,98.3 178.0,98.8 177.5,102.0 177.0,103.5 176.5,102.5 176.0,101.0 175.5,110.8 175.0,127.7 174.5,132.3 174.0,121.7 173.5,103.1 173.0,101.2 172.5,102.7 172.0,102.5 171.5,99.2 171.0,97.2 170.5,97.0 170.0,99.1 169.5,102.3 169.0,102.0 168.5,112.2 168.0,127.9 167.5,130.7 167.0,118.8 166.5,102.5 166.0,100.1 165.5,99.0 165.0,101.0 164.5,102.5 164.0,99.5 163.5,100.1 163.0,103.4 162.5,108.7 162.0,106.6 161.5,100.8 161.0,100.0 160.5,99.9 160.0,101.4 159.5,117.5 159.0,123.6 158.5,116.4 158.0,103.1 157.5,101.9 157.0,100.9 156.5,101.1 156.0,101.5 155.5,101.2 155.0,100.9 154.5,100.9 154.0,104.8 153.5,108.8 153.0,106.3 152.5,100.9 152.0,100.4 151.5,101.0 151.0,101.5 150.5,101.2 150.0,104.8 149.5,105.2 149.0,103.1 148.5,102.5 148.0,100.2 147.5,100.1 147.0,100.9 146.5,101.1 146.0,100.5 145.5,100.5 145.0,101.5 144.5,103.3 144.0,102.9 143.5,100.9 143.0,105.1 142.5,113.8 142.0,113.7 141.5,104.8 141.0,100.9 140.5,101.9 140.0,102.3 139.5,101.4 139.0,102.7 138.5,102.9 138.0,101.5 137.5,102.1 137.0,101.5 136.5,100.4 136.0,100.2 135.5,101.3 135.0,103.1 134.5,102.8 134.0,107.5 133.5,109.4 133.0,104.5 132.5,101.1 132.0,99.8 131.5,98.7 131.0,99.3 130.5,101.8 130.0,102.6 129.5,101.7 129.0,101.5 128.5,103.1 128.0,107.5 127.5,108.3 127.0,103.1 126.5,106.7 126.0,110.5 125.5,106.6 125.0,100.5 124.5,100.8 124.0,101.2 123.5,103.2 123.0,105.1 122.5,104.9 122.0,101.3 121.5,102.7 121.0,103.0 120.5,100.7 120.0,100.5 119.5,102.3 119.0,102.2 118.5,104.7 118.0,114.9 117.5,116.1 117.0,107.2 116.5,101.9 116.0,99.6 115.5,99.3 115.0,101.7 114.5,102.4 114.0,101.1 113.5,100.9 113.0,101.4 112.5,101.9 112.0,108.0 111.5,114.0 111.0,110.4 110.5,101.1 110.0,101.6 109.5,102.2 109.0,101.5 108.5,101.0 108.0,102.0 107.5,101.7 107.0,102.0 106.5,102.2 106.0,101.3 105.5,102.0 105.0,101.1 104.5,99.7 104.0,100.3 103.5,100.9 103.0,101.5 102.5,102.6 102.0,112.2 101.5,115.2 101.0,108.1 100.5,102.6 100.0,100.9 99.5,101.0 99.0,101.7 98.5,102.2 98.0,104.6 97.5,103.6 97.0,100.9 96.5,102.2 96.0,102.6 95.5,106.1 95.0,105.2 94.5,100.9 94.0,101.1 93.5,100.5 93.0,99.5 92.5,100.5 92.0,101.5 91.5,103.0 91.0,114.6 90.5,118.1 90.0,110.3 89.5,101.1 89.0,104.3 88.5,108.7 88.0,106.7 87.5,100.7 87.0,101.1 86.5,102.0 86.0,101.6 85.5,102.3 85.0,101.4 84.5,101.0 84.0,101.7 83.5,101.4 83.0,102.6 82.5,107.0 82.0,106.4 81.5,101.4 81.0,100.9 80.5,101.0 80.0,101.2 79.5,100.5 79.0,100.2 78.5,101.5 78.0,105.3 77.5,107.5 77.0,104.0 76.5,100.9 76.0,100.9 75.5,101.2 75.0,101.6 74.5,101.3 74.0,102.6 73.5,103.0 73.0,101.4 72.5,101.6 72.0,100.9 71.5,100.7 71.0,102.0 70.5,102.0 70.0,102.0 69.5,103.6 69.0,102.7 68.5,102.9 68.0,101.3 67.5,100.7 67.0,100.9 66.5,101.0 66.0,102.3 65.5,103.6 65.0,104.0 64.5,101.8 64.0,102.7 63.5,101.5 63.0,100.7 62.5,100.9 62.0,101.3 61.5,102.0 61.0,104.2 60.5,107.5 60.0,105.1 59.5,101.7 59.0,101.8 58.5,101.0 58.0,100.9 57.5,100.9 57.0,102.4 56.5,103.3 56.0,105.8 55.5,104.5 55.0,102.1 54.5,103.0 54.0,102.1 53.5,100.9 53.0,102.1 52.5,102.3 52.0,101.2 51.5,102.2 51.0,106.0 50.5,105.4 50.0,101.7 49.5,100.7 49.0,100.9 48.5,101.3 48.0,101.7 47.5,101.4 47.0,101.0 46.5,104.5 46.0,106.3 45.5,103.4 45.0,102.4 44.5,100.8 44.0,100.9 43.5,101.8 43.0,103.5 42.5,102.8 42.0,103.4 41.5,105.6 41.0,103.5 40.5,101.9 40.0,100.6 39.5,101.3 39.0,102.4 38.5,101.8 38.0,100.9 37.5,100.9 37.0,102.4 36.5,104.7 36.0,103.5 35.5,100.9 35.0,100.2 34.5,100.7 34.0,102.4 33.5,102.0 33.0,105.5 32.5,108.5 32.0,105.2 31.5,103.0 31.0,101.6 30.5,100.9 30.0,100.9 29.5,101.3 29.0,102.9 28.5,102.7 28.0,101.4 27.5,102.6 27.0,102.1 26.5,100.7 26.0,101.7 25.5,103.0 25.0,102.4 24.5,101.7 24.0,100.9 23.5,100.9 23.0,101.6 22.5,102.4 22.0,104.4 21.5,105.3 21.0,102.1 20.5,101.0 20.0,101.5 19.5,101.5 19.0,100.9 18.5,100.6 18.0,102.1 17.5,102.6 17.0,103.6 16.5,102.6 16.0,101.7 15.5,101.5 15.0,100.7 14.5,100.9 14.0,103.8 13.5,105.5 13.0,103.1 12.5,101.2 12.0,103.1 11.5,104.7 11.0,103.0 10.5,102.3 10.0,100.6 9.5,100.9 9.0,101.4 8.5,103.1 8.0,102.7 7.5,105.5 7.0,107.0 6.5,103.0 6.0,102.3 5.5,101.9 5.0,100.9 4.5,101.6 4.0,102.2 3.5,101.6 3.0,100.9 2.5,103.6 2.0,106.0 1.5,103.7 1.0,101.6 0.5,100.9 0.0,100.9Z" fill="url(#wg2)" filter="url(#wb2)"/></svg>
  </div>
  <div id="band2" class="a"></div>
  <div class="a" style="left:493px;top:53px;width:1px;height:248px;background:#fbfbfb"></div>
  <div id="hscroll" class="a"></div>
  <div class="a arrowL" style="left:6px;top:288px"></div>
  <div class="a arrowR" style="left:483px;top:288px"></div>
  <div id="hthumb" class="a"></div>
  <!-- tab control 1 -->
  <div class="a tab" style="left:54px;top:312px;width:39px;height:18px"></div>
  <div class="a tab" style="left:94px;top:312px;width:41px;height:18px"></div>
  <div class="a tab" style="left:136px;top:312px;width:69px;height:18px"></div>
  <div class="a pane" style="left:8px;top:329px;width:199px;height:92px"></div>
  <div class="a tabsel" style="left:8px;top:309px;width:46px;height:21px"></div>
  <div id="combo" class="a"></div><div id="comboarrow" class="a"></div>
  <!-- tab control 2 -->
  <div class="a pane" style="left:216px;top:329px;width:159px;height:92px"></div>
  <div class="a tabsel" style="left:216px;top:309px;width:55px;height:21px"></div>
  <div id="track" class="a"></div>
  <div class="a tick" style="left:231px;top:346px;height:4px"></div>
  <div class="a tick" style="left:245px"></div>
  <div class="a tick" style="left:260px"></div>
  <div class="a tick" style="left:274px"></div>
  <div class="a tick" style="left:288px"></div>
  <div class="a tick" style="left:302px"></div>
  <div class="a tick" style="left:317px"></div>
  <div class="a tick" style="left:331px"></div>
  <div class="a tick" style="left:345px;top:346px;height:4px"></div>
  <svg id="sthumb" class="a" width="9" height="15" viewBox="0 0 9 15"><defs><linearGradient id="sg" x1="0" y1="0" x2="0" y2="1"><stop offset="0" stop-color="#fff"/><stop offset=".5" stop-color="#efefef"/><stop offset=".55" stop-color="#dcdcdc"/><stop offset="1" stop-color="#d0d0d0"/></linearGradient></defs><path d="M.5 3.2L3.700 .6 6.900 3.200V13.200Q6.900 14.200 5.900 14.200H1.500Q.5 14.200 .5 13.200z" fill="url(#sg)" stroke="#6c6c6c"/></svg>
  <div id="exit" class="a"></div>
  <!-- help panel -->
  <div id="helpbox" class="a"><div id="helpin" class="a"></div></div>
  <div id="vscroll" class="a"></div>
  <div id="vthumb" class="a"></div>
  <div class="a" style="left:717px;top:191px;width:8px;height:8px;background:repeating-linear-gradient(to bottom,#6a6a6a 0,#6a6a6a 1px,#fff 1px,#fff 2px)"></div>
  <div class="a" style="left:716px;top:79px;width:0;height:0;border-left:4px solid transparent;border-right:4px solid transparent;border-bottom:4px solid #404040"></div>
  <div class="a" style="left:716px;top:415px;width:0;height:0;border-left:4px solid transparent;border-right:4px solid transparent;border-top:4px solid #404040"></div>
  <div class="a bul" style="left:511px;top:354px"></div>
  <div class="a bul" style="left:511px;top:367px"></div>
  <div class="a bul" style="left:511px;top:380px"></div>
  <div class="a" style="left:513px;top:423.5px;width:7px;height:3px;border-radius:4px 4px 0 0;background:#62c47a"></div>
  <!-- status bar -->
  <div id="status" class="a"></div>
  <div class="a sdiv" style="left:104px"></div>
  <div class="a sdiv" style="left:303px"></div>
  <div class="a sdiv" style="left:464px"></div>
  <svg class="a" style="left:718px;top:436px" width="12" height="12" viewBox="0 0 12 12"><g fill="#fff" transform="translate(-.7 -.7)"><rect x="9" y="1" width="2" height="2"/><rect x="6" y="4" width="2" height="2"/><rect x="9" y="4" width="2" height="2"/><rect x="3" y="7" width="2" height="2"/><rect x="6" y="7" width="2" height="2"/><rect x="9" y="7" width="2" height="2"/></g><g fill="#b4b4b4"><rect x="9" y="1" width="2" height="2"/><rect x="6" y="4" width="2" height="2"/><rect x="9" y="4" width="2" height="2"/><rect x="3" y="7" width="2" height="2"/><rect x="6" y="7" width="2" height="2"/><rect x="9" y="7" width="2" height="2"/></g></svg>
 </div>
<div id="texts" class="a" style="left:0;top:0;width:746px;height:484px">
<div class="t" style='left:29.7px;top:6.9px;font-size:12.5px;line-height:16.5px;color:#000;letter-spacing:-0.230px;text-shadow:0 0 5px #fff,0 0 7px #fff,0 0 9px #fff;'>Create-Ringtone Audio Converter</div>
<div class="t" style='left:15.3px;top:32.0px;font-size:12.5px;line-height:16.5px;color:#000;letter-spacing:-0.702px;'>File</div>
<div class="t" style='left:47.4px;top:32.0px;font-size:12.5px;line-height:16.5px;color:#000;letter-spacing:-0.650px;'>View</div>
<div class="t" style='left:86.5px;top:32.0px;font-size:12.5px;line-height:16.5px;color:#000;letter-spacing:-0.123px;'>Control</div>
<div class="t" style='left:140.3px;top:32.0px;font-size:12.5px;line-height:16.5px;color:#000;letter-spacing:-0.434px;'>Help</div>
<div class="t" style='left:24.6px;top:341.3px;font-size:11px;line-height:15px;color:#000;letter-spacing:-0.250px;'>MP3</div>
<div class="t" style='left:66.2px;top:343.4px;font-size:11px;line-height:15px;color:#000;letter-spacing:0.222px;'>WAV</div>
<div class="t" style='left:109.0px;top:343.4px;font-size:11px;line-height:15px;color:#000;letter-spacing:-0.658px;'>QCP</div>
<div class="t" style='left:150.9px;top:343.4px;font-size:11px;line-height:15px;color:#000;letter-spacing:-0.258px;'>iPhone M4R</div>
<div class="t" style='left:28.3px;top:374.5px;font-size:11px;line-height:15px;color:#000;letter-spacing:-0.253px;'>Bitrate (kbps)</div>
<div class="t" style='left:144.5px;top:374.7px;font-size:11px;line-height:15px;color:#000;letter-spacing:-0.144px;'>128</div>
<div class="t" style='left:28.5px;top:399.0px;font-size:11px;line-height:15px;color:#000;letter-spacing:-0.224px;'>Recommended value:</div>
<div class="t" style='left:140.1px;top:399.0px;font-size:11px;line-height:15px;color:#000;letter-spacing:-0.074px;'>128 kbps</div>
<div class="t" style='left:231.7px;top:341.4px;font-size:11px;line-height:15px;color:#000;letter-spacing:-0.423px;'>Amplifier</div>
<div class="t" style='left:365.0px;top:383.0px;font-size:11px;line-height:15px;color:#000;letter-spacing:-0.283px;'>x2</div>
<div class="t" style='left:453.2px;top:433.1px;font-size:11px;line-height:15px;color:#000;letter-spacing:-0.355px;'>Exit</div>
<div class="t" style='left:10.0px;top:459.7px;font-size:12.5px;line-height:16.5px;color:#000;letter-spacing:-0.687px;'>44.100 KHz, stereo</div>
<div class="t" style='left:117.5px;top:459.7px;font-size:12.5px;line-height:16.5px;color:#000;letter-spacing:-0.393px;'>Ringtone length: 30.4 from 30.4 sec</div>
<div class="t" style='left:317.0px;top:459.7px;font-size:12.5px;line-height:16.5px;color:#000;letter-spacing:-0.522px;'>WAV Ringtone Size ~237 Kb</div>
<div class="t" style='left:477.0px;top:459.7px;font-size:12.5px;line-height:16.5px;color:#000;letter-spacing:-0.568px;'>MP3 Ringtone Size ~474 Kb</div>
<div class="t" style='left:504.8px;top:84.8px;font-size:11.5px;line-height:15.5px;color:#000;font-weight:bold;letter-spacing:0.278px;-webkit-text-stroke:.4px #000;'>Help Menu</div>
<div class="t" style='left:724.8px;top:85.8px;font-size:11px;line-height:15px;color:#000;font-family:"DejaVu Sans", "Liberation Sans", sans-serif;-webkit-text-stroke:.25px #000;'>X</div>
<div class="t" style='left:655.7px;top:108.2px;font-size:9px;line-height:13px;color:#0000ee;letter-spacing:0.121px;-webkit-text-stroke:.15px #0000ee;'>&laquo; main menu</div>
<div class="t" style='left:516.3px;top:120.5px;font-size:16.5px;line-height:20.5px;color:#f5840f;font-weight:bold;letter-spacing:0.138px;-webkit-text-stroke:.3px #f5840f;'>Edit Menu</div>
<div class="t" style='left:516.0px;top:147.0px;font-size:11.5px;line-height:15.5px;color:#000;letter-spacing:-0.447px;'>Click and Hold the</div>
<div class="t" style='left:604.4px;top:147.0px;font-size:11.5px;line-height:15.5px;color:#000;font-weight:bold;letter-spacing:0.243px;'>left</div>
<div class="t" style='left:625.8px;top:147.0px;font-size:11.5px;line-height:15.5px;color:#000;letter-spacing:-0.373px;'>Mouse button</div>
<div class="t" style='left:516.0px;top:160.0px;font-size:11.5px;line-height:15.5px;color:#000;letter-spacing:-0.330px;'>where you would like your Ringtone</div>
<div class="t" style='left:516.0px;top:173.0px;font-size:11.5px;line-height:15.5px;color:#000;letter-spacing:-0.196px;'>selection to start, move the cursor to</div>
<div class="t" style='left:516.0px;top:186.0px;font-size:11.5px;line-height:15.5px;color:#000;letter-spacing:-0.238px;'>the right to Highlight in White the</div>
<div class="t" style='left:516.0px;top:199.0px;font-size:11.5px;line-height:15.5px;color:#000;letter-spacing:-0.383px;'>complete Ringtone selection, release</div>
<div class="t" style='left:516.0px;top:212.0px;font-size:11.5px;line-height:15.5px;color:#000;letter-spacing:-0.237px;'>the mouse button to select the end</div>
<div class="t" style='left:516.0px;top:225.0px;font-size:11.5px;line-height:15.5px;color:#000;letter-spacing:-0.255px;'>point for your Ringtone selection.</div>
<div class="t" style='left:516.0px;top:244.8px;font-size:11.5px;line-height:15.5px;color:#000;letter-spacing:-0.197px;'>Another option to select a part of an</div>
<div class="t" style='left:516.0px;top:257.6px;font-size:11.5px;line-height:15.5px;color:#000;letter-spacing:-0.421px;'>Audio File as your Ringtone is to simply</div>
<div class="t" style='left:516.0px;top:270.3px;font-size:11.5px;line-height:15.5px;color:#000;letter-spacing:-0.441px;'>click the</div>
<div class="t" style='left:557.4px;top:270.3px;font-size:11.5px;line-height:15.5px;color:#000;font-weight:bold;letter-spacing:0.329px;'>left</div>
<div class="t" style='left:578.6px;top:270.3px;font-size:11.5px;line-height:15.5px;color:#000;letter-spacing:-0.115px;'>mouse button at the start</div>
<div class="t" style='left:516.0px;top:283.6px;font-size:11.5px;line-height:15.5px;color:#000;letter-spacing:-0.291px;'>of your Ringtone selection, then click</div>
<div class="t" style='left:516.0px;top:296.0px;font-size:11.5px;line-height:15.5px;color:#000;letter-spacing:-0.520px;'>the</div>
<div class="t" style='left:535.1px;top:296.0px;font-size:11.5px;line-height:15.5px;color:#000;font-weight:bold;letter-spacing:0.208px;'>right</div>
<div class="t" style='left:564.5px;top:296.0px;font-size:11.5px;line-height:15.5px;color:#000;letter-spacing:-0.170px;'>mouse button at the end of</div>
<div class="t" style='left:516.0px;top:309.1px;font-size:11.5px;line-height:15.5px;color:#000;letter-spacing:-0.351px;'>the selection. Upon clicking the</div>
<div class="t" style='left:667.4px;top:309.1px;font-size:11.5px;line-height:15.5px;color:#000;font-weight:bold;letter-spacing:0.231px;'>right</div>
<div class="t" style='left:516.0px;top:322.3px;font-size:11.5px;line-height:15.5px;color:#000;letter-spacing:-0.300px;'>mouse button, your Ringtone selection</div>
<div class="t" style='left:516.0px;top:335.2px;font-size:11.5px;line-height:15.5px;color:#000;letter-spacing:-0.401px;'>will be Highlighted in White.</div>
<div class="t" style='left:516.0px;top:357.6px;font-size:13.5px;line-height:17.5px;color:#000;font-weight:bold;letter-spacing:-0.308px;'>Control</div>
<div class="t" style='left:534.3px;top:378.2px;font-size:11.5px;line-height:15.5px;color:#0a0ac8;font-weight:bold;letter-spacing:0.107px;'>Prewiew Ringtone</div>
<div class="t" style='left:534.3px;top:391.5px;font-size:11.5px;line-height:15.5px;color:#0a0ac8;font-weight:bold;letter-spacing:-0.051px;'>Play Entire Audio File</div>
<div class="t" style='left:534.3px;top:404.5px;font-size:11.5px;line-height:15.5px;color:#0a0ac8;font-weight:bold;letter-spacing:-0.057px;'>Stop Playing</div>
<div class="t" style='left:516.0px;top:426.0px;font-size:13.5px;line-height:17.5px;color:#000;font-weight:bold;letter-spacing:-0.325px;'>Send Ringtone via</div>
</div>
</div>

</body></html>
